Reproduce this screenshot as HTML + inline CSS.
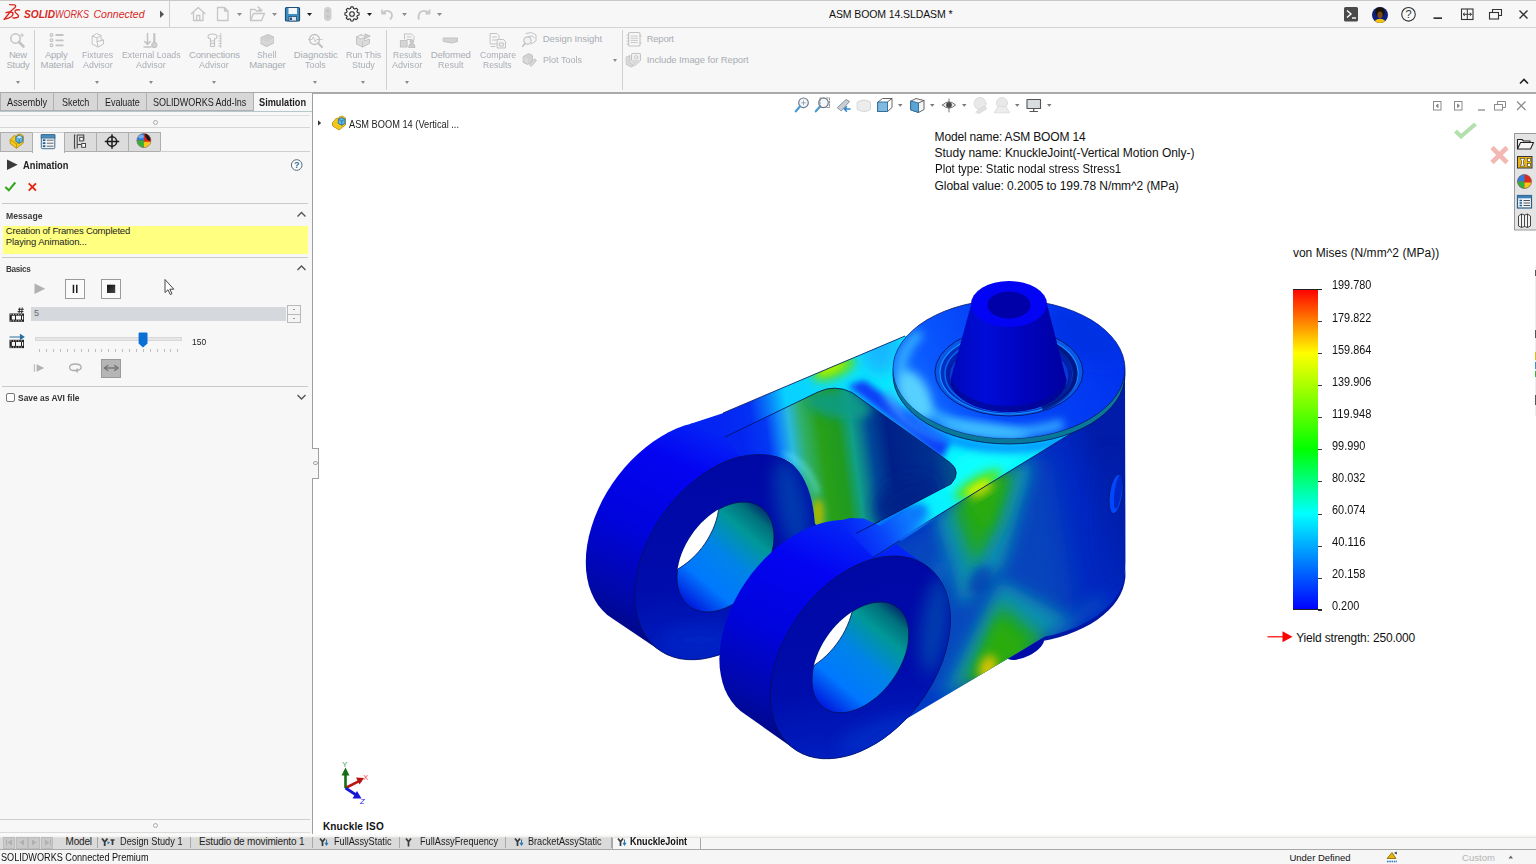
<!DOCTYPE html>
<html lang="en">
<head>
<meta charset="utf-8">
<title>ASM BOOM 14.SLDASM *</title>
<style>
*{box-sizing:border-box;margin:0;padding:0}
html,body{width:1536px;height:864px;overflow:hidden;background:#f7f7f7;font-family:"Liberation Sans",sans-serif;font-size:11px;color:#1e1e1e}
.abs{position:absolute}
#titlebar{position:absolute;left:0;top:0;width:1536px;height:28px;background:#f7f7f7;box-shadow:inset 0 1px 0 #c8c8c8, inset 0 -1px 0 #d4d4d4}
#ribbon{position:absolute;left:0;top:28px;width:1536px;height:65px;background:#f7f7f7;border-bottom:1px solid #a9a9a9}
.rb{position:absolute;text-align:center;color:#a9adb3;font-size:10.5px;line-height:10.5px;white-space:nowrap;letter-spacing:.1px}
.rb2{position:absolute;color:#a9adb3;font-size:10px;white-space:nowrap;letter-spacing:.2px}
.dd{position:absolute;width:0;height:0;border-left:2.5px solid transparent;border-right:2.5px solid transparent;border-top:3px solid #8a8a8a}
.ddk{position:absolute;width:0;height:0;border-left:2.5px solid transparent;border-right:2.5px solid transparent;border-top:3px solid #222}
.vsep{position:absolute;width:1px;background:#d0d0d0}
#tabs{position:absolute;left:0;top:93px;width:313px;height:18px}
.tab{position:absolute;top:0;height:18px;background:#d7d7d7;border:1px solid #b0b0b0;border-top:none;font-size:11px;line-height:17px;text-align:center;color:#1e1e1e;white-space:nowrap}
#left{position:absolute;left:0;top:111px;width:312px;height:724px;background:#f7f7f7}
#vp{position:absolute;left:312px;top:93px;width:1224px;height:742px;background:#fff;border-left:1px solid #a0a0a0;border-top:1px solid #a9a9a9}
.hline{position:absolute;height:1px;background:#c9c9c9}
.sec{position:absolute;font-weight:bold;font-size:10px;color:#333;letter-spacing:0}
.vt{position:absolute;white-space:nowrap;color:#111}
#btabs{position:absolute;left:0;top:834px;width:1536px;height:15.500px;background:linear-gradient(to bottom,#ffffff 0,#f3f3f3 2.500px,#e6e3dc 2.800px,#e6e3dc 3.500px,#f6f6f6 3.600px);border-bottom:1px solid #a8a8a8}
.bt{position:absolute;top:0;height:13px;font-size:10.5px;line-height:13px;white-space:nowrap;color:#1e1e1e}
#status{position:absolute;left:0;top:849.500px;width:1536px;height:15px;background:#f6f6f6}
.t{position:absolute;white-space:nowrap;color:#1e1e1e}
</style>
</head>
<body>
<div id="titlebar">
<svg class="abs" style="left:0;top:0" width="470" height="27" viewBox="0 0 470 27">
 <!-- DS logo -->
 <g fill="none" stroke="#d9281f" stroke-width="1.35" stroke-linecap="round" stroke-linejoin="round">
  <path d="M9.600 4.600 L14.300 4.900 Q16.600 5.600 15 7.600 L11.200 10.800 L4.300 19.200"/>
  <path d="M6 12.700 Q10 11.400 12.700 12.700 Q13.700 14.500 11.500 16.500 Q8 18.900 4.300 19.200"/>
  <path d="M19.700 9.800 Q16 9.400 15 10.900 Q14.700 12.400 17 14 Q19.400 16 18 17.200 Q16 18.300 12.800 17.900"/>
 </g>
 <text y="18.400" font-family="Liberation Sans, sans-serif" font-size="10" font-style="italic" fill="#d9281f"><tspan x="24" font-weight="bold" textLength="31" lengthAdjust="spacingAndGlyphs">SOLID</tspan><tspan x="55" textLength="34" lengthAdjust="spacingAndGlyphs">WORKS</tspan><tspan> </tspan><tspan x="93.500" font-size="10.700" textLength="51" lengthAdjust="spacingAndGlyphs">Connected</tspan></text>
 <path d="M160 10.5 L164 14.2 L160 18 Z" fill="#555"/>
 <rect x="169" y="1" width="1" height="26" fill="#cfcfcf"/>
 <!-- home -->
 <g fill="none" stroke="#c6c6c6" stroke-width="1.3" stroke-linejoin="round">
  <path d="M191 14 L198.2 7.5 L205.5 14 M193.5 12.5 V20.5 H203 V12.5 M196.7 20.5 V15.5 H199.8 V20.5"/>
  <path d="M217.5 7.5 H224.5 L228 11 V20.5 H217.5 Z M224.5 7.5 V11 H228"/>
  <path d="M250.500 20.500 V9.500 H255 L256.500 11 H259 M250.500 20.500 L253.500 13.500 H264.500 L261.500 20.500 Z"/>
  <path d="M257.500 7 Q260.500 7.500 260.500 11 M258.500 9.500 L260.500 11.500 L262.500 9.500"/>
 </g>
 <path d="M237 13 h5 l-2.500 3 z M272 13 h5 l-2.500 3 z" fill="#8d8d8d"/>
 <!-- save -->
 <rect x="285.500" y="7.500" width="14" height="13.500" rx="1" fill="#3d8fc0" stroke="#1f4e79" stroke-width="1.200"/>
 <rect x="288.500" y="8" width="8.500" height="6" fill="#f4f6f8"/>
 <rect x="289" y="16.500" width="7.500" height="4.500" fill="#dfe5ea" stroke="#1f4e79" stroke-width=".8"/>
 <rect x="290" y="17.500" width="2" height="2.500" fill="#1f4e79"/>
 <path d="M307 13 h5 l-2.500 3 z" fill="#222"/>
 <!-- traffic -->
 <rect x="324" y="7" width="7.500" height="14" rx="3.700" fill="#d0d0d0"/>
 <circle cx="327.700" cy="11" r="1.600" fill="#c2c2c2"/><circle cx="327.700" cy="16.500" r="1.600" fill="#c2c2c2"/>
 <!-- gear -->
 <g transform="translate(352,14)">
  <path d="M-1.200 -6.800 H1.200 L1.700 -5 L3 -4.400 L4.600 -5.400 L6.300 -3.700 L5.300 -2.100 L5.900 -0.800 L7.700 -0.400 V2 L5.900 2.500 L5.300 3.800 L6.300 5.400 L4.600 7.100 L3 6.100 L1.700 6.700 L1.200 8.500 H-1.200 L-1.700 6.700 L-3 6.100 L-4.600 7.100 L-6.300 5.400 L-5.300 3.800 L-5.900 2.500 L-7.700 2 V-0.400 L-5.900 -0.800 L-5.300 -2.100 L-6.300 -3.700 L-4.600 -5.400 L-3 -4.400 L-1.700 -5 Z" transform="translate(0,-0.850) scale(0.920)" fill="none" stroke="#2a2a2a" stroke-width="1.150" stroke-linejoin="round"/>
  <circle r="2.300" fill="none" stroke="#2a2a2a" stroke-width="1.100"/>
 </g>
 <path d="M367 13 h5 l-2.500 3 z" fill="#222"/>
 <!-- undo redo -->
 <g fill="none" stroke="#c8c8c8" stroke-width="1.800" stroke-linejoin="round">
  <path d="M382 9.500 L382 13.500 L386 13.500 M382.500 13 Q387 9 391 12.500 Q393.500 16 390 19.500"/>
  <path d="M429.500 9.500 L429.500 13.500 L425.500 13.500 M429 13 Q424 9 420 12.500 Q417.500 16 419 19.500"/>
 </g>
 <path d="M402 13 h5 l-2.500 3 z M437 13 h5 l-2.500 3 z" fill="#8d8d8d"/>
</svg>
<div class="abs" style="left:829px;top:8px;font-size:10.500px;line-height:12px;color:#111;white-space:nowrap;letter-spacing:-.1px">ASM BOOM 14.SLDASM *</div>
<svg class="abs" style="left:1336px;top:0" width="200" height="27" viewBox="1336 0 200 27">
 <rect x="1344" y="7" width="14" height="14.500" rx="1.500" fill="#4a4a4a"/>
 <path d="M1347 10.500 L1351 14 L1347 17.500" fill="none" stroke="#fff" stroke-width="1.400"/><path d="M1352 18 H1356" stroke="#fff" stroke-width="1.400"/>
 <circle cx="1380" cy="15" r="8" fill="#10207a"/>
 <circle cx="1380" cy="12" r="4.800" fill="#1a1208"/>
 <ellipse cx="1380" cy="14.800" rx="2.600" ry="3.400" fill="#7a4a1e"/>
 <path d="M1374.500 21 Q1380 16.500 1385.500 21 Q1383 23 1380 23 Q1377 23 1374.500 21 Z" fill="#f2c40f"/>
 <circle cx="1408.500" cy="14.300" r="6.800" fill="none" stroke="#333" stroke-width="1.100"/>
 <text x="1408.500" y="18.300" text-anchor="middle" font-family="Liberation Sans, sans-serif" font-size="11" fill="#333">?</text>
 <rect x="1433.500" y="17.300" width="8.500" height="1.700" fill="#333"/>
 <rect x="1461.500" y="9" width="11.500" height="10.500" fill="none" stroke="#333" stroke-width="1.100"/>
 <path d="M1467.300 9 V19.500 M1463 14.300 H1471.500 M1464.800 12.800 L1463 14.300 L1464.800 15.800 M1469.800 12.800 L1471.500 14.300 L1469.800 15.800" fill="none" stroke="#333" stroke-width="1"/>
 <path d="M1492.500 12 V9.500 H1501.500 V15.500 H1499" fill="none" stroke="#333" stroke-width="1.100"/>
 <rect x="1489.500" y="12.500" width="9" height="6.500" fill="none" stroke="#333" stroke-width="1.100"/>
 <path d="M1519.500 10.500 L1527.500 18.500 M1527.500 10.500 L1519.500 18.500" stroke="#333" stroke-width="1.400"/>
</svg>
</div>
<div id="ribbon">
</div>
<div id="ribbonc" style="position:absolute;left:0;top:0;width:1536px;height:93px">
<div class="vsep" style="left:34px;top:30px;height:60px"></div>
<div class="vsep" style="left:386px;top:30px;height:60px"></div>
<div class="vsep" style="left:622px;top:30px;height:60px"></div>
<div class="t" style="left:8.9px;top:48.11px;font-size:9.5px;line-height:14px;letter-spacing:-0.402px;color:#a9adb3;">New</div>
<div class="t" style="left:6.5px;top:58.11px;font-size:9.5px;line-height:14px;letter-spacing:-0.273px;color:#a9adb3;">Study</div>
<div class="dd" style="left:15.5px;top:81px"></div>
<div class="t" style="left:44.9px;top:48.11px;font-size:9.5px;line-height:14px;letter-spacing:-0.241px;color:#a9adb3;">Apply</div>
<div class="t" style="left:40.6px;top:58.11px;font-size:9.5px;line-height:14px;letter-spacing:-0.112px;color:#a9adb3;">Material</div>
<div class="t" style="left:81.8px;top:48.11px;font-size:9.5px;line-height:14px;transform:scaleX(0.9236);transform-origin:0 50%;color:#a9adb3;">Fixtures</div>
<div class="t" style="left:83.0px;top:58.11px;font-size:9.5px;line-height:14px;transform:scaleX(0.9376);transform-origin:0 50%;color:#a9adb3;">Advisor</div>
<div class="dd" style="left:94.8px;top:81px"></div>
<div class="t" style="left:121.7px;top:48.11px;font-size:9.5px;line-height:14px;transform:scaleX(0.9247);transform-origin:0 50%;color:#a9adb3;">External Loads</div>
<div class="t" style="left:136.2px;top:58.11px;font-size:9.5px;line-height:14px;transform:scaleX(0.9376);transform-origin:0 50%;color:#a9adb3;">Advisor</div>
<div class="dd" style="left:148.5px;top:81px"></div>
<div class="t" style="left:189.0px;top:48.11px;font-size:9.5px;line-height:14px;letter-spacing:-0.181px;color:#a9adb3;">Connections</div>
<div class="t" style="left:199.4px;top:58.11px;font-size:9.5px;line-height:14px;transform:scaleX(0.9376);transform-origin:0 50%;color:#a9adb3;">Advisor</div>
<div class="dd" style="left:212.1px;top:81px"></div>
<div class="t" style="left:257.0px;top:48.11px;font-size:9.5px;line-height:14px;transform:scaleX(0.9231);transform-origin:0 50%;color:#a9adb3;">Shell</div>
<div class="t" style="left:249.2px;top:58.11px;font-size:9.5px;line-height:14px;letter-spacing:-0.165px;color:#a9adb3;">Manager</div>
<div class="t" style="left:293.8px;top:48.11px;font-size:9.5px;line-height:14px;letter-spacing:-0.039px;color:#a9adb3;">Diagnostic</div>
<div class="t" style="left:305.2px;top:58.11px;font-size:9.5px;line-height:14px;transform:scaleX(0.9379);transform-origin:0 50%;color:#a9adb3;">Tools</div>
<div class="dd" style="left:313.0px;top:81px"></div>
<div class="t" style="left:345.9px;top:48.11px;font-size:9.5px;line-height:14px;transform:scaleX(0.9329);transform-origin:0 50%;color:#a9adb3;">Run This</div>
<div class="t" style="left:352.1px;top:58.11px;font-size:9.5px;line-height:14px;transform:scaleX(0.9386);transform-origin:0 50%;color:#a9adb3;">Study</div>
<div class="dd" style="left:360.8px;top:81px"></div>
<div class="t" style="left:392.6px;top:48.11px;font-size:9.5px;line-height:14px;transform:scaleX(0.8997);transform-origin:0 50%;color:#a9adb3;">Results</div>
<div class="t" style="left:392.2px;top:58.11px;font-size:9.5px;line-height:14px;transform:scaleX(0.9534);transform-origin:0 50%;color:#a9adb3;">Advisor</div>
<div class="dd" style="left:404.5px;top:81px"></div>
<div class="t" style="left:430.8px;top:48.11px;font-size:9.5px;line-height:14px;letter-spacing:-0.244px;color:#a9adb3;">Deformed</div>
<div class="t" style="left:437.7px;top:58.11px;font-size:9.5px;line-height:14px;transform:scaleX(0.9433);transform-origin:0 50%;color:#a9adb3;">Result</div>
<div class="t" style="left:479.7px;top:48.11px;font-size:9.5px;line-height:14px;transform:scaleX(0.9215);transform-origin:0 50%;color:#a9adb3;">Compare</div>
<div class="t" style="left:483.0px;top:58.11px;font-size:9.5px;line-height:14px;transform:scaleX(0.9029);transform-origin:0 50%;color:#a9adb3;">Results</div>
<div class="t" style="left:542.8px;top:32.31px;font-size:9.5px;line-height:14px;letter-spacing:-0.069px;color:#a9adb3;">Design Insight</div>
<div class="t" style="left:542.8px;top:53.11px;font-size:9.5px;line-height:14px;transform:scaleX(0.9509);transform-origin:0 50%;color:#a9adb3;">Plot Tools</div>
<div class="t" style="left:646.7px;top:32.31px;font-size:9.5px;line-height:14px;letter-spacing:-0.242px;color:#a9adb3;">Report</div>
<div class="t" style="left:646.7px;top:53.11px;font-size:9.5px;line-height:14px;letter-spacing:-0.111px;color:#a9adb3;">Include Image for Report</div>
<div class="dd" style="left:613px;top:58.5px"></div>
<svg class="abs" style="left:1518px;top:77px" width="12" height="9" viewBox="0 0 12 9"><path d="M2 6.500 L6 2.500 L10 6.500" fill="none" stroke="#222" stroke-width="1.600"/></svg>
<svg class="abs" style="left:0;top:28px" width="760" height="65" viewBox="0 28 760 65">
<g fill="none" stroke="#c3c3c3" stroke-width="1.200" stroke-linejoin="round" stroke-linecap="round">
 <!-- new study -->
 <circle cx="15.500" cy="38.500" r="4.700" stroke-width="1.500"/>
 <path d="M19 42 L23.500 46.500" stroke-width="2.600"/>
 <path d="M22 33.500 V37 M20.300 35.200 H23.800" stroke-width=".9"/>
 <!-- apply material -->
 <circle cx="51.500" cy="35" r="1.400"/><circle cx="51.500" cy="40.300" r="1.400"/><circle cx="51.500" cy="45.300" r="1.400"/>
 <path d="M55.500 35 H63.500 M55.500 40.300 H63.500 M55.500 45.300 H63.500" stroke-width="1.800" stroke-linecap="butt"/>
 <!-- fixtures advisor -->
 <path d="M92.500 36 L96.500 33.500 L101 35.500 V39 L103.500 40.200 V44 L98 47 L92.500 44.200 Z M92.500 36 L97 38 L101 35.500 M97 38 V41.500 L103.500 40.200 M97 41.500 L98 47" stroke-width="1"/>
 <!-- external loads -->
 <path d="M147.500 33.500 V44 M144.800 41.500 L147.500 44.500 L150.200 41.500 M144 47 H151" stroke-width="1.500"/>
 <path d="M154.300 34 V43.500" stroke-width="2.200"/><circle cx="154.300" cy="45" r="2.500" fill="#d2d2d2"/>
 <!-- connections advisor -->
 <path d="M208 36.500 Q208 34 212.500 34 Q217 34 217 36.500 Q217 38.500 214.500 38.800 V46.500 H210.500 V38.800 Q208 38.500 208 36.500 Z M210.500 41 H214.500 M210.500 43.500 H214.500" stroke-width="1.100"/>
 <path d="M220.800 33.500 V47.500 M218.500 36 H220.800 M219.200 38.500 H220.800 M218.500 41 H220.800 M219.200 43.500 H220.800 M218.500 46 H220.800" stroke-width=".9"/>
 <!-- shell manager -->
 <path d="M261 37.500 L268 34.500 L273.500 37 V43 L266.500 46.500 L261 43.500 Z" fill="#d0d0d0" stroke="#c8c8c8"/>
 <path d="M261 39.500 L266.500 42.500 L273.500 39 M261 41.500 L266.500 44.500 L273.500 41" stroke="#e4e4e4" stroke-width=".7"/>
 <!-- diagnostic -->
 <circle cx="314.500" cy="39.500" r="5" stroke-width="1.300"/>
 <path d="M318.500 43.500 L322 47" stroke-width="2.200"/>
 <path d="M308.500 39.500 H312 L313.300 37 L315.300 42 L316.500 39.500 H322" stroke-width=".9"/>
 <!-- run this study -->
 <path d="M356.500 37 L361 34.500 L364 36 M356.500 37 V44 L362.500 47 L369.500 43.500 V39 L364.500 41 V37.500 L361 39 L356.500 37 M362.500 47 V42" stroke-width="1" fill="#dcdcdc"/>
 <path d="M365 34 L370 36 L365 38.500 Z" fill="#cfcfcf"/>
 <!-- results advisor -->
 <path d="M404.500 34 H411.500 L414 36.500 V40 M404.500 34 V39 M407 37 H411 M407 39.500 H411" stroke-width="1"/>
 <rect x="400.500" y="40.500" width="6.500" height="6.500" fill="#d6d6d6"/>
 <circle cx="411.800" cy="41.500" r="1.700" fill="#cdcdcd"/><path d="M408.800 47.500 Q408.800 43.800 411.800 43.800 Q414.800 43.800 414.800 47.500 Z" fill="#cdcdcd"/>
 <!-- deformed -->
 <path d="M443.500 38 H457.500 V41.500 L452 43 L443.500 41.500 Z" fill="#d3d3d3" stroke-width="1"/>
 <!-- compare -->
 <path d="M490.500 33.500 H497 L499 35.500 V44 H490.500 Z M492.500 37 H496.500 M492.500 40 H496.500" stroke-width="1"/>
 <path d="M497.500 39.500 H503.500 L505.500 41.500 V48 H497.500 Z" fill="#f3f3f3" stroke-width="1"/>
 <path d="M499.800 43 H503.300 V46 H499.800 Z M491 46.500 H495" stroke-width="1"/>
 <!-- design insight -->
 <path d="M526 33.500 L531.500 32.500 L536 35 V41 L531 44 M528.500 36.500 L532 36 L534.500 38" stroke-width="1"/>
 <circle cx="527.500" cy="40.500" r="3.700" stroke-width="1.200" fill="#f1f1f1"/>
 <path d="M525 43.500 L522.800 46.300" stroke-width="1.600"/>
 <!-- plot tools -->
 <path d="M523.500 56.500 L528.500 53.500 L532.500 55.500 V61 L527.500 64.500 L523.500 62.500 Z" fill="#d2d2d2" stroke-width="1"/>
 <path d="M525 58.500 L527.500 59.800 M525 60.800 L527.500 62" stroke="#ececec" stroke-width=".8"/>
 <path d="M531.500 66 L536.500 60.500 L534.500 58.800 L529.500 64.500 Z" fill="#d8d8d8" stroke-width="1"/>
 <!-- report -->
 <rect x="628.500" y="32.500" width="11.500" height="13.500" rx="1.300" stroke-width="1.100"/>
 <path d="M631 36 H637.500 M631 38.200 H637.500 M631 40.400 H637.500 M631 42.600 H637.500" stroke-width=".9"/>
 <path d="M627 35 H629 M627 38 H629 M627 41 H629 M627 44 H629 M640 36 H641.300 M640 43 H641.300" stroke-width=".9"/>
 <!-- include image -->
 <path d="M626.500 57 L630 55.500 V63 L634.500 65.500 L631 67 L626.500 64.500 Z" fill="#d9d9d9" stroke-width=".9"/>
 <rect x="631.500" y="53.500" width="9" height="7.500" rx=".8" fill="#f0f0f0" stroke-width="1"/>
 <circle cx="636.200" cy="57.300" r="1.700" stroke-width=".9"/>
 <path d="M630 61.500 H640.500 L635.500 66 Z" fill="#d9d9d9" stroke="none"/>
</g>
</svg>
</div>
<div id="tabs">
<div class="tab" style="left:-0.5px;width:54.0px"></div>
<div class="tab" style="left:52.5px;width:45.5px"></div>
<div class="tab" style="left:97.0px;width:49.5px"></div>
<div class="tab" style="left:145.5px;width:108.0px"></div>
</div>
<div id="left"></div>
<div id="leftc" style="position:absolute;left:0;top:0;width:313px;height:836px">
<div class="t" style="left:6.7px;top:94.96px;font-size:10.5px;line-height:14px;transform:scaleX(0.8833);transform-origin:0 50%;">Assembly</div>
<div class="t" style="left:61.9px;top:94.96px;font-size:10.5px;line-height:14px;transform:scaleX(0.8600);transform-origin:0 50%;letter-spacing:-0.071px;">Sketch</div>
<div class="t" style="left:104.8px;top:94.96px;font-size:10.5px;line-height:14px;transform:scaleX(0.8600);transform-origin:0 50%;letter-spacing:-0.056px;">Evaluate</div>
<div class="t" style="left:153.0px;top:94.96px;font-size:10.5px;line-height:14px;transform:scaleX(0.8600);transform-origin:0 50%;letter-spacing:-0.071px;">SOLIDWORKS Add-Ins</div>
<div class="t" style="left:259.4px;top:94.96px;font-size:10.5px;line-height:14px;transform:scaleX(0.8758);transform-origin:0 50%;font-weight:bold;">Simulation</div>
<div class="hline" style="left:0;top:110.500px;width:312px;height:1.500px;background:#b5c9cb"></div>
<div class="hline" style="left:0;top:115px;width:310px;background:#dedede"></div>
<div class="abs" style="left:152.500px;top:119.500px;width:5px;height:5px;border:1px solid #aaa;border-radius:50%"></div>
<div class="hline" style="left:0;top:127px;width:310px;background:#d6d6d6"></div>
<div class="abs" style="left:-0.5px;top:131.500px;width:33px;height:20.500px;background:#dcdcdc;border:1px solid #aeaeae"></div>
<div class="abs" style="left:31.5px;top:131.500px;width:33px;height:21px;background:#f7f7f7;border:1px solid #aeaeae;border-bottom:none;border-top-color:#d0d0d0"></div>
<div class="abs" style="left:63.5px;top:131.500px;width:33px;height:20.500px;background:#dcdcdc;border:1px solid #aeaeae"></div>
<div class="abs" style="left:95.5px;top:131.500px;width:33px;height:20.500px;background:#dcdcdc;border:1px solid #aeaeae"></div>
<div class="abs" style="left:127.5px;top:131.500px;width:33px;height:20.500px;background:#dcdcdc;border:1px solid #aeaeae"></div>
<div class="hline" style="left:160px;top:151px;width:150px;background:#cfcfcf"></div>
<div class="t" style="left:22.5px;top:158.26px;font-size:10.5px;line-height:14px;transform:scaleX(0.8845);transform-origin:0 50%;font-weight:bold;color:#222;">Animation</div>
<div class="hline" style="left:2px;top:203px;width:306px"></div>
<div class="t" style="left:5.8px;top:208.61px;font-size:9.5px;line-height:14px;transform:scaleX(0.9095);transform-origin:0 50%;font-weight:bold;color:#3a3a3a;">Message</div>
<div class="abs" style="left:2.500px;top:225.500px;width:305.500px;height:28px;background:#ffff80"></div>
<div class="t" style="left:5.8px;top:224.21px;font-size:9.5px;line-height:14px;letter-spacing:-0.203px;color:#222;">Creation of Frames Completed</div>
<div class="t" style="left:5.8px;top:234.61px;font-size:9.5px;line-height:14px;letter-spacing:-0.117px;color:#222;">Playing Animation...</div>
<div class="hline" style="left:2px;top:257px;width:306px"></div>
<div class="t" style="left:5.8px;top:262.11px;font-size:9.5px;line-height:14px;transform:scaleX(0.8600);transform-origin:0 50%;letter-spacing:-0.359px;font-weight:bold;color:#3a3a3a;">Basics</div>
<div class="abs" style="left:65px;top:279px;width:20px;height:20px;background:#fbfbfb;border:1px solid #9a9a9a"></div>
<div class="abs" style="left:101px;top:279px;width:20px;height:20px;background:#fbfbfb;border:1px solid #9a9a9a"></div>
<div class="abs" style="left:31px;top:307px;width:254.500px;height:14px;background:#d5d8dc"></div>
<div class="t" style="left:34.0px;top:305.68px;font-size:9px;line-height:14px;color:#6a6a6a;">5</div>
<div class="abs" style="left:287px;top:305px;width:13.500px;height:18px;border:1px solid #b9b9b9;background:#f4f4f4"></div>
<div class="hline" style="left:287px;top:313.500px;width:13.500px;background:#b9b9b9"></div>
<div class="abs" style="left:292.500px;top:309px;width:2px;height:1px;background:#999"></div><div class="abs" style="left:292.500px;top:318px;width:2px;height:1px;background:#999"></div>
<div class="abs" style="left:35px;top:337px;width:147px;height:4px;background:#e6e6e6;border:1px solid #d8d8d8"></div>
<div class="abs" style="left:39.3px;top:349px;width:1px;height:3px;background:#bdbdbd"></div><div class="abs" style="left:46.2px;top:349px;width:1px;height:3px;background:#bdbdbd"></div><div class="abs" style="left:53.1px;top:349px;width:1px;height:3px;background:#bdbdbd"></div><div class="abs" style="left:60.0px;top:349px;width:1px;height:3px;background:#bdbdbd"></div><div class="abs" style="left:66.9px;top:349px;width:1px;height:3px;background:#bdbdbd"></div><div class="abs" style="left:73.8px;top:349px;width:1px;height:3px;background:#bdbdbd"></div><div class="abs" style="left:80.7px;top:349px;width:1px;height:3px;background:#bdbdbd"></div><div class="abs" style="left:87.6px;top:349px;width:1px;height:3px;background:#bdbdbd"></div><div class="abs" style="left:94.5px;top:349px;width:1px;height:3px;background:#bdbdbd"></div><div class="abs" style="left:101.4px;top:349px;width:1px;height:3px;background:#bdbdbd"></div><div class="abs" style="left:108.3px;top:349px;width:1px;height:3px;background:#bdbdbd"></div><div class="abs" style="left:115.2px;top:349px;width:1px;height:3px;background:#bdbdbd"></div><div class="abs" style="left:122.1px;top:349px;width:1px;height:3px;background:#bdbdbd"></div><div class="abs" style="left:129.0px;top:349px;width:1px;height:3px;background:#bdbdbd"></div><div class="abs" style="left:135.9px;top:349px;width:1px;height:3px;background:#bdbdbd"></div><div class="abs" style="left:142.8px;top:349px;width:1px;height:3px;background:#bdbdbd"></div><div class="abs" style="left:149.7px;top:349px;width:1px;height:3px;background:#bdbdbd"></div><div class="abs" style="left:156.6px;top:349px;width:1px;height:3px;background:#bdbdbd"></div><div class="abs" style="left:163.5px;top:349px;width:1px;height:3px;background:#bdbdbd"></div><div class="abs" style="left:170.4px;top:349px;width:1px;height:3px;background:#bdbdbd"></div><div class="abs" style="left:177.3px;top:349px;width:1px;height:3px;background:#bdbdbd"></div>
<div class="t" style="left:191.7px;top:334.71px;font-size:9.5px;line-height:14px;transform:scaleX(0.8897);transform-origin:0 50%;color:#222;">150</div>
<div class="abs" style="left:101px;top:358.500px;width:20px;height:19.500px;background:#b5b5b5;border:1px solid #9a9a9a"></div>
<div class="hline" style="left:2px;top:385.500px;width:306px"></div>
<div class="abs" style="left:5.500px;top:392.500px;width:9.500px;height:9.500px;background:#fff;border:1px solid #777;border-radius:2px"></div>
<div class="t" style="left:17.7px;top:391.01px;font-size:9.5px;line-height:14px;transform:scaleX(0.8891);transform-origin:0 50%;font-weight:bold;color:#333;">Save as AVI file</div>
<div class="hline" style="left:0;top:832px;width:310px;background:#dcdcdc"></div>
<div class="hline" style="left:0;top:819px;width:310px;background:#cfcfcf"></div>
<div class="abs" style="left:152.500px;top:823px;width:5px;height:5px;border:1px solid #aaa;border-radius:50%"></div>
<svg class="abs" style="left:0;top:128px" width="312" height="280" viewBox="0 128 312 280">
 <!-- tab1: assembly icon -->
 <path d="M10.200 139.500 L14 135.500 L17 136.500 V134.800 L20.500 134 L23.300 135.800 V143 L16.500 148.300 L10.200 143.500 Z" fill="#f3c81d" stroke="#b8860b" stroke-width=".8" stroke-linejoin="round"/>
 <path d="M10.200 139.500 L16.500 144 L23.300 139.500 M16.500 144 V148.300" fill="none" stroke="#b8860b" stroke-width=".7"/>
 <path d="M15.800 137 L19.300 135.200 L22.800 137 V141.300 L19.300 143.300 L15.800 141.300 Z" fill="#5db9e6" stroke="#1f6e9c" stroke-width=".8" stroke-linejoin="round"/>
 <path d="M15.800 137 L19.300 138.800 L22.800 137 M19.300 138.800 V143.300" fill="none" stroke="#1f6e9c" stroke-width=".7"/>
 <path d="M16.300 137.300 L19.300 135.800 L22.300 137.300 L19.300 138.800 Z" fill="#bfe6f7"/>
 <!-- tab2: property manager -->
 <rect x="41.300" y="134.700" width="13.500" height="14" rx="1" fill="#f2f5f8" stroke="#3c6d92" stroke-width="1"/>
 <rect x="41.300" y="134.700" width="13.500" height="3.300" fill="#4b8fc1" stroke="#3c6d92" stroke-width="1"/>
 <rect x="42.800" y="139.300" width="2.600" height="1.800" fill="#1d5f90"/><rect x="42.800" y="142.300" width="2.600" height="1.800" fill="#1d5f90"/><rect x="42.800" y="145.300" width="2.600" height="1.800" fill="#1d5f90"/>
 <path d="M46.800 140.200 H53.500 M46.800 143.200 H53.500 M46.800 146.200 H53.500" stroke="#666" stroke-width="1"/>
 <!-- tab3: configuration manager -->
 <path d="M75.500 135 H74.500 V148.300 H75.500" fill="none" stroke="#444" stroke-width="1.100"/>
 <path d="M77.200 135 H83.800 V140.500 M77.200 135 V148.300 M77.200 144.500 H81" fill="none" stroke="#444" stroke-width="1.100"/>
 <rect x="79.700" y="137.300" width="3.600" height="3.600" fill="#fff" stroke="#444" stroke-width="1"/>
 <rect x="81.700" y="143.500" width="3.800" height="3.800" fill="#fff" stroke="#444" stroke-width="1"/>
 <!-- tab4: crosshair -->
 <circle cx="112" cy="141.500" r="4.700" fill="none" stroke="#1a1a1a" stroke-width="1.500"/>
 <path d="M112 134.300 V148.700 M104.800 141.500 H119.200" stroke="#1a1a1a" stroke-width="1.500"/>
 <!-- tab5: color ball -->
 <defs><clipPath id="cb"><circle cx="143.900" cy="140.600" r="7.100"/></clipPath></defs>
 <g clip-path="url(#cb)">
  <rect x="136" y="133" width="16" height="16" fill="#e0281d"/>
  <path d="M136 133 H143.900 V140.600 H136 Z" fill="#2d7ee0"/>
  <path d="M136 140.600 H143.900 V149 H136 Z" fill="#35b13a"/>
  <path d="M143.900 141.800 H152 V149 H143.900 Z" fill="#f5c518"/>
  <path d="M143.900 133 L152 133 L152 141 Z" fill="#e0281d"/>
  <ellipse cx="147.600" cy="137" rx="1.800" ry="4.300" transform="rotate(-32 147.600 137)" fill="#1a1a1a"/>
  <ellipse cx="141" cy="136.500" rx="3" ry="1.800" fill="#fff" opacity=".35"/>
 </g>
 <circle cx="143.900" cy="140.600" r="7.100" fill="none" stroke="#7a7a7a" stroke-width=".5"/>
 <!-- animation header -->
 <path d="M7 159.600 L17.700 164.800 L7 170.100 Z" fill="#3a3a3a"/>
 <circle cx="296.700" cy="165" r="5.300" fill="#fdfdfd" stroke="#5b6b7d" stroke-width="1"/>
 <text x="296.700" y="168.300" text-anchor="middle" font-family="Liberation Sans, sans-serif" font-size="9" font-weight="bold" fill="#2d6da3">?</text>
 <path d="M5.300 187 L8.800 190.300 L15.300 182.500" fill="none" stroke="#33a61c" stroke-width="2.100" stroke-linejoin="miter"/>
 <path d="M28.700 183.300 L36 190.700 M36 183.300 L28.700 190.700" stroke="#e0280f" stroke-width="1.900"/>
 <!-- carets -->
 <g fill="none" stroke="#555" stroke-width="1.400">
  <path d="M297.500 216.500 L301.500 212.500 L305.500 216.500"/>
  <path d="M297.500 270 L301.500 266 L305.500 270"/>
  <path d="M297.500 395 L301.500 399 L305.500 395"/>
 </g>
 <!-- play / pause / stop -->
 <path d="M34.500 283.500 L45.200 288.800 L34.500 294 Z" fill="#b1b1b1"/>
 <path d="M72.700 284.700 H74.200 V293 H72.700 Z M76 284.700 H77.500 V293 H76 Z" fill="#1c1c1c"/>
 <defs><linearGradient id="stp" x1="0" y1="0" x2="1" y2="1"><stop offset="0" stop-color="#111"/><stop offset="1" stop-color="#484848"/></linearGradient></defs>
 <rect x="107" y="284.700" width="8.200" height="8.300" fill="url(#stp)"/>
 <!-- mouse cursor -->
 <path d="M165 279.500 V292.500 L168 289.800 L170.200 294.500 L172 293.700 L169.800 289.200 H173.800 Z" fill="#fff" stroke="#333" stroke-width=".9" stroke-linejoin="round"/>
 <!-- film icons -->
 <g>
  <rect x="9.500" y="313.500" width="14.500" height="8.300" fill="#1e1e1e"/>
  <rect x="11.800" y="315.700" width="3.200" height="3.900" fill="#f7f7f7"/><rect x="16" y="315.700" width="5" height="3.900" fill="#f7f7f7"/><rect x="22" y="315.700" width="1.200" height="3.900" fill="#f7f7f7"/>
  <path d="M10.300 314.600 h1.200 M12.900 314.600 h1.200 M15.500 314.600 h1.200 M18.100 314.600 h1.200 M20.700 314.600 h1.200 M10.300 320.800 h1.200 M12.900 320.800 h1.200 M15.500 320.800 h1.200 M18.100 320.800 h1.200 M20.700 320.800 h1.200" stroke="#f7f7f7" stroke-width=".8"/>
 </g>
 <path d="M19.800 307.500 L19 313.300 M22.300 307.500 L21.500 313.300 M18 309.300 H23.800 M17.600 311.600 H23.400" stroke="#1e1e1e" stroke-width=".9"/>
 <g transform="translate(0,26.300)">
  <rect x="9.500" y="313.500" width="14.500" height="8.300" fill="#1e1e1e"/>
  <rect x="11.800" y="315.700" width="3.200" height="3.900" fill="#f7f7f7"/><rect x="16" y="315.700" width="5" height="3.900" fill="#f7f7f7"/><rect x="22" y="315.700" width="1.200" height="3.900" fill="#f7f7f7"/>
  <path d="M10.300 314.600 h1.200 M12.900 314.600 h1.200 M15.500 314.600 h1.200 M18.100 314.600 h1.200 M20.700 314.600 h1.200 M10.300 320.800 h1.200 M12.900 320.800 h1.200 M15.500 320.800 h1.200 M18.100 320.800 h1.200 M20.700 320.800 h1.200" stroke="#f7f7f7" stroke-width=".8"/>
 </g>
 <path d="M9.500 337 H22.500 M20.500 334.800 L23.800 337 L20.500 339.200 Z" stroke="#2a6f9e" stroke-width="1.200" fill="#2a6f9e"/>
 <!-- slider thumb -->
 <path d="M138.600 333.500 Q138.600 332.500 139.600 332.500 H146.500 Q147.500 332.500 147.500 333.500 V343.500 L143 347.500 L138.600 343.500 Z" fill="#0b6fd6"/>
 <!-- step / loop / reciprocate -->
 <path d="M33.800 364.300 H34.900 V371.800 H33.800 Z M36.600 364.300 L44.300 368 L36.600 371.800 Z" fill="#b3b3b3"/>
 <path d="M75.500 370.500 H73 Q69.600 370.300 69.600 367.300 Q69.800 364 75.300 364 Q81 364 81.200 367.300 Q81 370 77.500 370.500" fill="none" stroke="#adadad" stroke-width="1.300"/>
 <path d="M77.800 368 L74.500 370.500 L77.800 373 Z" fill="#adadad"/>
 <path d="M106 368 H116.500" stroke="#6f6f6f" stroke-width="1.300"/>
 <path d="M108.200 365.300 L104.400 368 L108.200 370.700 M114.300 365.300 L118.100 368 L114.300 370.700" fill="none" stroke="#6f6f6f" stroke-width="1.300"/>
</svg>
</div>
<div id="vp"></div>
<div id="vpc" style="position:absolute;left:0;top:0;width:1536px;height:864px">
<div class="abs" style="left:312px;top:448px;width:7px;height:30.500px;background:#f7f7f7;border:1px solid #a0a0a0;border-left:none"></div>
<div class="abs" style="left:313px;top:460.500px;width:4.500px;height:4.500px;border:1px solid #a5a5a5;border-radius:50%"></div>
<svg class="abs" style="left:560px;top:260px" width="600" height="520" viewBox="560 260 600 520">
<defs>
<filter id="b3" x="-50%" y="-50%" width="200%" height="200%"><feGaussianBlur stdDeviation="3"/></filter>
<filter id="b5" x="-50%" y="-50%" width="200%" height="200%"><feGaussianBlur stdDeviation="5"/></filter>
<filter id="b8" x="-50%" y="-50%" width="200%" height="200%"><feGaussianBlur stdDeviation="8"/></filter>
<filter id="b12" x="-50%" y="-50%" width="200%" height="200%"><feGaussianBlur stdDeviation="12"/></filter>
<filter id="b18" x="-50%" y="-50%" width="200%" height="200%"><feGaussianBlur stdDeviation="18"/></filter>
<linearGradient id="gLugR" gradientUnits="userSpaceOnUse" x1="600" y1="650" x2="705" y2="420"><stop offset="0" stop-color="#000868"/><stop offset=".22" stop-color="#0008a8"/><stop offset=".5" stop-color="#0004dc"/><stop offset=".8" stop-color="#0404f2"/><stop offset="1" stop-color="#0428f6"/></linearGradient>
<linearGradient id="gLugF" gradientUnits="userSpaceOnUse" x1="735" y1="750" x2="840" y2="525"><stop offset="0" stop-color="#000868"/><stop offset=".22" stop-color="#0008a8"/><stop offset=".5" stop-color="#0004dc"/><stop offset=".8" stop-color="#0404f2"/><stop offset="1" stop-color="#0424f6"/></linearGradient>
<linearGradient id="gFaceR" gradientUnits="userSpaceOnUse" x1="700" y1="460" x2="730" y2="655"><stop offset="0" stop-color="#0008a4"/><stop offset=".6" stop-color="#000cac"/><stop offset="1" stop-color="#0020c0"/></linearGradient>
<linearGradient id="gFaceF" gradientUnits="userSpaceOnUse" x1="835" y1="560" x2="870" y2="758"><stop offset="0" stop-color="#0008a4"/><stop offset=".6" stop-color="#000cac"/><stop offset="1" stop-color="#0020c0"/></linearGradient>
<linearGradient id="gHoleR" gradientUnits="userSpaceOnUse" x1="690" y1="604" x2="768" y2="512"><stop offset="0" stop-color="#0020e0"/><stop offset=".22" stop-color="#0078ff"/><stop offset=".5" stop-color="#0084e8"/><stop offset=".75" stop-color="#009898"/><stop offset=".9" stop-color="#00707c"/><stop offset="1" stop-color="#003070"/></linearGradient>
<linearGradient id="gHoleF" gradientUnits="userSpaceOnUse" x1="825" y1="706" x2="903" y2="612"><stop offset="0" stop-color="#0020e0"/><stop offset=".22" stop-color="#0078ff"/><stop offset=".5" stop-color="#0084e8"/><stop offset=".75" stop-color="#009898"/><stop offset=".9" stop-color="#00707c"/><stop offset="1" stop-color="#003070"/></linearGradient>
<linearGradient id="gSide" gradientUnits="userSpaceOnUse" x1="900" y1="600" x2="1127" y2="520"><stop offset="0" stop-color="#0038c8"/><stop offset=".5" stop-color="#0030c0"/><stop offset=".85" stop-color="#0028c4"/><stop offset="1" stop-color="#001ca8"/></linearGradient>
<linearGradient id="gPocket" gradientUnits="userSpaceOnUse" x1="745" y1="470" x2="965" y2="440"><stop offset="0" stop-color="#0424f0"/><stop offset=".12" stop-color="#0438f4"/><stop offset=".18" stop-color="#1088f8"/><stop offset=".225" stop-color="#28b8e0"/><stop offset=".28" stop-color="#30b070"/><stop offset=".36" stop-color="#28a018"/><stop offset=".44" stop-color="#209a20"/><stop offset=".5" stop-color="#10a088"/><stop offset=".54" stop-color="#0a7890"/><stop offset=".58" stop-color="#004898"/><stop offset=".66" stop-color="#002088"/><stop offset=".84" stop-color="#003090"/><stop offset="1" stop-color="#006888"/></linearGradient>
<linearGradient id="gCone" gradientUnits="userSpaceOnUse" x1="950" y1="0" x2="1067" y2="0"><stop offset="0" stop-color="#0008b8"/><stop offset=".3" stop-color="#000cd8"/><stop offset=".6" stop-color="#0004c0"/><stop offset="1" stop-color="#0000a0"/></linearGradient>
<linearGradient id="gDisc" gradientUnits="userSpaceOnUse" x1="900" y1="430" x2="1110" y2="320"><stop offset="0" stop-color="#1480ff"/><stop offset=".25" stop-color="#0a58ff"/><stop offset=".5" stop-color="#0444f8"/><stop offset="1" stop-color="#0030ec"/></linearGradient>
<linearGradient id="gTop" gradientUnits="userSpaceOnUse" x1="720" y1="440" x2="1000" y2="400"><stop offset="0" stop-color="#0424f4"/><stop offset=".12" stop-color="#0430f4"/><stop offset=".185" stop-color="#0878f8"/><stop offset=".25" stop-color="#08d0ff"/><stop offset=".7" stop-color="#08f0ff"/><stop offset="1" stop-color="#08f4ff"/></linearGradient>
</defs>
<path d="M585.8 562.3 L586.1 553.8 L587.2 545.1 L588.9 536.3 L591.3 527.4 L594.3 518.4 L598.0 509.5 L602.2 500.6 L607.0 492.0 L612.4 483.6 L618.2 475.5 L624.5 467.8 L631.1 460.5 L638.2 453.7 L645.5 447.4 L653.0 441.8 L660.8 436.7 L668.6 432.3 L676.5 428.6 L684.4 425.6 L692.2 423.4 L700.0 421.9 L707.5 421.2 L714.8 421.4 L721.9 422.2 L728.5 423.9 L734.8 426.3 L740.6 429.5 L789.6 462.5 L795.0 466.3 L799.8 470.9 L804.0 476.1 L807.7 482.0 L810.7 488.4 L813.1 495.3 L814.8 502.7 L815.9 510.5 L816.2 518.7 L815.9 527.2 L814.8 535.9 L813.1 544.7 L810.7 553.6 L807.7 562.6 L804.0 571.5 L799.8 580.4 L795.0 589.0 L789.6 597.4 L783.8 605.5 L777.5 613.2 L770.9 620.5 L763.8 627.3 L756.5 633.5 L749.0 639.2 L741.2 644.3 L733.4 648.7 L725.5 652.4 L717.6 655.4 L709.8 657.6 L702.0 659.1 L694.5 659.8 L687.2 659.6 L680.1 658.8 L673.5 657.1 L667.2 654.7 L661.4 651.5 L612.4 618.5 L607.0 614.7 L602.2 610.1 L598.0 604.9 L594.3 599.0 L591.3 592.6 L588.9 585.7 L587.2 578.3 L586.1 570.5 Z" fill="url(#gLugR)"/>
<clipPath id="cTop"><path d="M690.0 424.0 L722.0 413.5 L905.0 336.0 L960.0 330.0 L1090.0 430.0 L1075.0 431.0 L872.0 556.0 L815.0 522.0 L790.0 460.0 L765.0 452.0 Z"/></clipPath>
<path d="M690.0 424.0 L722.0 413.5 L905.0 336.0 L960.0 330.0 L1090.0 430.0 L1075.0 431.0 L872.0 556.0 L815.0 522.0 L790.0 460.0 L765.0 452.0 Z" fill="url(#gTop)"/>
<g clip-path="url(#cTop)">
<ellipse cx="890" cy="528" rx="42" ry="13" transform="rotate(-29 890 528)" fill="#0458f8" filter="url(#b5)"/>
<path d="M848 386 L864 380 L950 443 L942 460 Z" fill="#0840f8" filter="url(#b3)"/>
<path d="M888 392 Q900 425 945 436" fill="none" stroke="#40a8ff" stroke-width="8" filter="url(#b5)"/>
<ellipse cx="985" cy="462" rx="50" ry="18" transform="rotate(-31 985 462)" fill="#10ffff" filter="url(#b8)"/>
<ellipse cx="978" cy="485" rx="27" ry="9" transform="rotate(-31 978 485)" fill="#50e828" filter="url(#b5)"/><ellipse cx="978" cy="488" rx="14" ry="5" transform="rotate(-31 978 488)" fill="#d0f000" filter="url(#b3)"/>
<ellipse cx="834" cy="368.500" rx="24" ry="10" transform="rotate(-23 834 368.500)" fill="#60e028" filter="url(#b5)"/><ellipse cx="831" cy="368" rx="14" ry="5" transform="rotate(-23 831 368)" fill="#a8f000" filter="url(#b3)"/>
<ellipse cx="880" cy="345" rx="20" ry="30" fill="#18b8ff" filter="url(#b8)"/>
<path d="M1108.1 416.9 L1103.3 420.8 L1098.0 424.5 L1092.3 428.0 L1086.2 431.2 L1079.8 434.2 L1073.1 436.9 L1066.1 439.4 L1058.9 441.5 L1051.4 443.4 L1043.7 444.9 L1035.9 446.2 L1027.9 447.1 L1019.9 447.7 L1011.8 448.0 L1003.7 447.9 L995.7 447.6 L987.6 446.9 L979.7 445.8 L971.9 444.5 L964.3 442.8 L956.9 440.9 L949.7 438.6 L942.8 436.1 L936.2 433.3 L929.9 430.2 L923.9 426.9 L918.4 423.4 L913.2 419.6 L908.5 415.6 L904.2 411.5" fill="none" stroke="#0850ff" stroke-width="6" filter="url(#b5)"/>
</g>
<path d="M723 413 L905 336" stroke="#00105a" stroke-width=".8" fill="none"/>
<path d="M816.2 518.7 L815.9 527.2 L814.8 535.8 L813.1 544.7 L810.7 553.6 L807.7 562.6 L804.0 571.5 L799.8 580.3 L795.0 589.0 L789.6 597.4 L783.8 605.5 L777.5 613.2 L770.9 620.5 L763.8 627.3 L756.5 633.5 L749.0 639.2 L741.2 644.3 L733.4 648.7 L725.5 652.4 L717.6 655.4 L709.8 657.6 L702.0 659.1 L694.5 659.7 L687.2 659.6 L680.1 658.8 L673.5 657.1 L667.2 654.7 L661.4 651.5 L656.0 647.7 L651.2 643.1 L647.0 637.9 L643.3 632.0 L640.3 625.6 L637.9 618.7 L636.2 611.3 L635.1 603.5 L634.8 595.3 L635.1 586.8 L636.2 578.2 L637.9 569.3 L640.3 560.4 L643.3 551.4 L647.0 542.5 L651.2 533.7 L656.0 525.0 L661.4 516.6 L667.2 508.5 L673.5 500.8 L680.1 493.5 L687.2 486.7 L694.5 480.5 L702.0 474.8 L709.8 469.7 L717.6 465.3 L725.5 461.6 L733.4 458.6 L741.2 456.4 L749.0 454.9 L756.5 454.3 L763.8 454.4 L770.9 455.2 L777.5 456.9 L783.8 459.3 L789.6 462.5 L795.0 466.3 L799.8 470.9 L804.0 476.1 L807.7 482.0 L810.7 488.4 L813.1 495.3 L814.8 502.7 L815.9 510.5 Z" fill="url(#gFaceR)" stroke="#00105a" stroke-width=".8"/>
<clipPath id="cFR"><path d="M816.2 518.7 L815.9 527.2 L814.8 535.8 L813.1 544.7 L810.7 553.6 L807.7 562.6 L804.0 571.5 L799.8 580.3 L795.0 589.0 L789.6 597.4 L783.8 605.5 L777.5 613.2 L770.9 620.5 L763.8 627.3 L756.5 633.5 L749.0 639.2 L741.2 644.3 L733.4 648.7 L725.5 652.4 L717.6 655.4 L709.8 657.6 L702.0 659.1 L694.5 659.7 L687.2 659.6 L680.1 658.8 L673.5 657.1 L667.2 654.7 L661.4 651.5 L656.0 647.7 L651.2 643.1 L647.0 637.9 L643.3 632.0 L640.3 625.6 L637.9 618.7 L636.2 611.3 L635.1 603.5 L634.8 595.3 L635.1 586.8 L636.2 578.2 L637.9 569.3 L640.3 560.4 L643.3 551.4 L647.0 542.5 L651.2 533.7 L656.0 525.0 L661.4 516.6 L667.2 508.5 L673.5 500.8 L680.1 493.5 L687.2 486.7 L694.5 480.5 L702.0 474.8 L709.8 469.7 L717.6 465.3 L725.5 461.6 L733.4 458.6 L741.2 456.4 L749.0 454.9 L756.5 454.3 L763.8 454.4 L770.9 455.2 L777.5 456.9 L783.8 459.3 L789.6 462.5 L795.0 466.3 L799.8 470.9 L804.0 476.1 L807.7 482.0 L810.7 488.4 L813.1 495.3 L814.8 502.7 L815.9 510.5 Z"/></clipPath>
<g clip-path="url(#cFR)"><ellipse cx="792" cy="505" rx="16" ry="48" transform="rotate(-12 792 505)" fill="#0044b0" opacity=".8" filter="url(#b8)"/><ellipse cx="700" cy="640" rx="40" ry="14" fill="#0028c8" opacity=".7" filter="url(#b8)"/></g>
<path d="M774.0 536.5 L773.8 541.0 L773.3 545.7 L772.3 550.4 L771.1 555.2 L769.5 560.0 L767.5 564.7 L765.2 569.5 L762.7 574.1 L759.8 578.6 L756.7 582.9 L753.3 587.0 L749.8 590.9 L746.0 594.6 L742.1 597.9 L738.1 601.0 L733.9 603.7 L729.7 606.0 L725.5 608.0 L721.3 609.6 L717.1 610.8 L712.9 611.6 L708.9 611.9 L705.0 611.9 L701.2 611.4 L697.7 610.5 L694.3 609.2 L691.2 607.6 L688.3 605.5 L685.8 603.0 L683.5 600.3 L681.5 597.1 L679.9 593.7 L678.7 590.0 L677.7 586.0 L677.2 581.9 L677.0 577.5 L677.2 573.0 L677.7 568.3 L678.7 563.6 L679.9 558.8 L681.5 554.0 L683.5 549.3 L685.8 544.5 L688.3 539.9 L691.2 535.4 L694.3 531.1 L697.7 527.0 L701.2 523.1 L705.0 519.4 L708.9 516.1 L712.9 513.0 L717.1 510.3 L721.3 508.0 L725.5 506.0 L729.7 504.4 L733.9 503.2 L738.1 502.4 L742.1 502.1 L746.0 502.1 L749.8 502.6 L753.3 503.5 L756.7 504.8 L759.8 506.4 L762.7 508.5 L765.2 511.0 L767.5 513.7 L769.5 516.9 L771.1 520.3 L772.3 524.0 L773.3 528.0 L773.8 532.1 Z" fill="url(#gHoleR)" stroke="#00105a" stroke-width=".8"/>
<clipPath id="cHR"><path d="M774.0 536.5 L773.8 541.0 L773.3 545.7 L772.3 550.4 L771.1 555.2 L769.5 560.0 L767.5 564.7 L765.2 569.5 L762.7 574.1 L759.8 578.6 L756.7 582.9 L753.3 587.0 L749.8 590.9 L746.0 594.6 L742.1 597.9 L738.1 601.0 L733.9 603.7 L729.7 606.0 L725.5 608.0 L721.3 609.6 L717.1 610.8 L712.9 611.6 L708.9 611.9 L705.0 611.9 L701.2 611.4 L697.7 610.5 L694.3 609.2 L691.2 607.6 L688.3 605.5 L685.8 603.0 L683.5 600.3 L681.5 597.1 L679.9 593.7 L678.7 590.0 L677.7 586.0 L677.2 581.9 L677.0 577.5 L677.2 573.0 L677.7 568.3 L678.7 563.6 L679.9 558.8 L681.5 554.0 L683.5 549.3 L685.8 544.5 L688.3 539.9 L691.2 535.4 L694.3 531.1 L697.7 527.0 L701.2 523.1 L705.0 519.4 L708.9 516.1 L712.9 513.0 L717.1 510.3 L721.3 508.0 L725.5 506.0 L729.7 504.4 L733.9 503.2 L738.1 502.4 L742.1 502.1 L746.0 502.1 L749.8 502.6 L753.3 503.5 L756.7 504.8 L759.8 506.4 L762.7 508.5 L765.2 511.0 L767.5 513.7 L769.5 516.9 L771.1 520.3 L772.3 524.0 L773.3 528.0 L773.8 532.1 Z"/></clipPath>
<g clip-path="url(#cHR)"><path d="M719.1 501.9 L718.9 506.4 L718.4 510.9 L717.5 515.6 L716.3 520.2 L714.7 524.9 L712.8 529.6 L710.5 534.2 L708.0 538.8 L705.2 543.2 L702.2 547.4 L698.9 551.4 L695.4 555.3 L691.7 558.8 L687.9 562.1 L683.9 565.1 L679.9 567.8 L675.7 570.1 L671.6 572.0 L667.5 573.6 L663.3 574.7 L659.3 575.5 L655.3 575.9 L651.5 575.8 L647.8 575.3 L644.3 574.5 L641.0 573.2 L638.0 571.6 L635.2 569.5 L632.7 567.1 L630.4 564.4 L628.5 561.4 L626.9 558.0 L625.7 554.4 L624.8 550.5 L624.3 546.4 L624.1 542.1 L624.3 537.7 L624.8 533.1 L625.7 528.5 L626.9 523.8 L628.5 519.1 L630.4 514.4 L632.7 509.8 L635.2 505.3 L638.0 500.9 L641.0 496.6 L644.3 492.6 L647.8 488.8 L651.5 485.2 L655.3 481.9 L659.3 478.9 L663.3 476.3 L667.5 474.0 L671.6 472.0 L675.7 470.5 L679.9 469.3 L683.9 468.5 L687.9 468.2 L691.7 468.2 L695.4 468.7 L698.9 469.6 L702.2 470.8 L705.2 472.5 L708.0 474.5 L710.5 476.9 L712.8 479.6 L714.7 482.7 L716.3 486.0 L717.5 489.7 L718.4 493.6 L718.9 497.7 Z" fill="#fff" stroke="#00105a" stroke-width=".8"/>
</g>
<clipPath id="cPk"><path d="M725 437 L818 392 Q835 384 852 392.500 L950 462.500 Q962 472 951 484 L855 534 L815 524 Q812 480 790 462 Q770 450 740 456 Z"/></clipPath>
<path d="M725 437 L818 392 Q835 384 852 392.500 L950 462.500 Q962 472 951 484 L855 534 L815 524 Q812 480 790 462 Q770 450 740 456 Z" fill="url(#gPocket)"/>
<g clip-path="url(#cPk)">
<ellipse cx="818" cy="514" rx="6" ry="15" fill="#a8b800" filter="url(#b3)"/>
<ellipse cx="838" cy="405" rx="34" ry="13" transform="rotate(10 838 405)" fill="#0c9c88" opacity=".85" filter="url(#b5)"/>
<ellipse cx="905" cy="500" rx="32" ry="20" transform="rotate(-30 905 500)" fill="#002088" filter="url(#b8)"/>
<path d="M784.1 453.3 L789.0 455.5 L793.5 458.2 L797.8 461.3 L801.8 464.8 L805.4 468.7 L808.6 473.0 L811.5 477.7 L814.0 482.7 L816.2 488.1 L817.9 493.7" fill="none" stroke="#70f0ff" stroke-width="3.500" filter="url(#b3)" opacity=".75"/>
</g>
<path d="M725 437 L818 392 Q835 384 852 392.500 L950 462.500 Q962 472 951 484 L855 534" stroke="#00105a" stroke-width=".8" fill="none"/>
<ellipse cx="1025" cy="647.500" rx="21" ry="9" transform="rotate(-27 1025 647.500)" fill="#000ca8"/>
<path d="M1125.4 571.6 L1125.4 577.4 L1124.5 583.1 L1122.8 588.9 L1120.4 594.5 L1117.2 599.9 L1113.3 605.2 L1108.6 610.3 L1103.3 615.1 L1097.3 619.7 L1090.7 623.9 L1083.5 627.8 L1075.8 631.3 L1067.7 634.5 L1059.2 637.2 L1050.3 639.5 L1041.1 641.3 L1041.0 633.3 L1050.1 631.5 L1058.9 629.2 L1067.4 626.5 L1075.5 623.3 L1083.2 619.8 L1090.3 615.9 L1096.9 611.7 L1102.8 607.1 L1108.2 602.3 L1112.8 597.2 L1116.7 591.9 L1119.9 586.5 L1122.4 580.9 L1124.0 575.1 L1124.9 569.4 L1124.9 563.6 Z" fill="#0018a4"/>
<clipPath id="cSide"><path d="M872.0 556.0 L1075.0 431.0 L1073.9 428.6 L1081.5 425.3 L1088.6 421.6 L1095.2 417.5 L1101.2 413.1 L1106.7 408.5 L1111.4 403.6 L1115.5 398.5 L1118.9 393.2 L1121.6 387.8 L1123.5 382.3 L1124.6 376.7 L1125.0 371.0 L1125.4 563.0 L1125.0 570.0 L1124.5 576.3 L1123.1 582.5 L1120.8 588.6 L1117.6 594.6 L1113.5 600.4 L1108.6 605.9 L1102.8 611.1 L1096.4 616.1 L1089.2 620.6 L1081.3 624.7 L1072.9 628.4 L1064.0 631.6 L1054.6 634.4 L1044.8 636.6 L903.7 720.4 L860.0 720.0 L850.0 600.0 Z"/></clipPath>
<path d="M872.0 556.0 L1075.0 431.0 L1073.9 428.6 L1081.5 425.3 L1088.6 421.6 L1095.2 417.5 L1101.2 413.1 L1106.7 408.5 L1111.4 403.6 L1115.5 398.5 L1118.9 393.2 L1121.6 387.8 L1123.5 382.3 L1124.6 376.7 L1125.0 371.0 L1125.4 563.0 L1125.0 570.0 L1124.5 576.3 L1123.1 582.5 L1120.8 588.6 L1117.6 594.6 L1113.5 600.4 L1108.6 605.9 L1102.8 611.1 L1096.4 616.1 L1089.2 620.6 L1081.3 624.7 L1072.9 628.4 L1064.0 631.6 L1054.6 634.4 L1044.8 636.6 L903.7 720.4 L860.0 720.0 L850.0 600.0 Z" fill="url(#gSide)"/>
<g clip-path="url(#cSide)">
<path d="M880 560 L1050 450 L1075 610 L930 700 Z" fill="#0858b8" opacity=".55" filter="url(#b12)"/>
<path d="M935 515 L1035 455 L1004 565 L962 606 Z" fill="#0a90b0" filter="url(#b8)"/>
<path d="M940 700 L1075 622 L1000 580 Z" fill="#0a90b0" filter="url(#b8)"/>
<path d="M1023 470 L980 580" stroke="#0c84c8" stroke-width="9" opacity=".85" filter="url(#b5)" fill="none"/>
<path d="M1045 640 L1105 598" stroke="#0868c0" stroke-width="12" opacity=".55" filter="url(#b8)" fill="none"/>
<path d="M905 610 L950 560" stroke="#0870c8" stroke-width="14" opacity=".6" filter="url(#b8)" fill="none"/>
<path d="M953 505 L1016 466 L1000 522 L974 566 Z" fill="#22a814" filter="url(#b8)"/>
<path d="M964 498 L1006 472 L986 528 Z" fill="#2cac10" filter="url(#b5)"/>
<ellipse cx="981" cy="489" rx="13" ry="5.500" transform="rotate(-31 981 489)" fill="#d8e000" filter="url(#b5)"/>
<path d="M960 690 L1045 642 L1000 604 Z" fill="#20a818" filter="url(#b8)"/>
<path d="M972 682 L1028 650 L998 622 Z" fill="#2cac10" filter="url(#b5)"/>
<ellipse cx="988" cy="668" rx="8" ry="13" transform="rotate(18 988 668)" fill="#e0c400" filter="url(#b5)"/>
<ellipse cx="980" cy="580" rx="10" ry="16" transform="rotate(35 980 580)" fill="#0024b0" opacity=".55" filter="url(#b5)"/>
<ellipse cx="1110" cy="520" rx="18" ry="70" fill="#0020b0" opacity=".5" filter="url(#b8)"/>
</g>
<path d="M872 556 L1075 431" stroke="#00105a" stroke-width=".8" fill="none"/>
<ellipse cx="1116" cy="494" rx="6.500" ry="20" transform="rotate(8 1116 494)" fill="#0048ff" stroke="#00105a" stroke-width=".7"/>
<ellipse cx="1118" cy="492" rx="3.500" ry="17" transform="rotate(8 1118 492)" fill="#0028c8"/>
<ellipse cx="1009" cy="374.500" rx="116" ry="69.500" fill="#0a7898" stroke="#00105a" stroke-width=".8"/>
<ellipse cx="1009" cy="369" rx="116" ry="69.500" fill="url(#gDisc)" stroke="#00105a" stroke-width=".7"/>
<clipPath id="cDisc"><ellipse cx="1009" cy="369" rx="116" ry="69.500"/></clipPath>
<g clip-path="url(#cDisc)">
<path d="M1063.0 423.6 L1054.4 426.2 L1045.3 428.3 L1036.0 430.0 L1026.5 431.2 L1016.8 431.8 L1007.1 432.0 L997.4 431.6 L987.8 430.8 L978.3 429.4 L969.1 427.5 L960.2 425.2 L951.8 422.4 L943.8 419.2 L936.3 415.6 L929.4 411.6 L923.1 407.2 L917.6 402.5 L912.8 397.6 L908.7 392.4 L905.5 387.1 L903.2 381.6 L901.7 375.9 L901.0 370.3 L901.3 364.6 L902.4 359.0 L904.4 353.4 L907.2 348.0 L910.9 342.7 L915.3 337.7 L920.5 332.9" fill="none" stroke="#38b8ff" stroke-width="9" filter="url(#b5)"/>
<ellipse cx="915" cy="395" rx="14" ry="26" transform="rotate(-25 915 395)" fill="#58d0ff" filter="url(#b5)"/>
<ellipse cx="985" cy="430" rx="45" ry="6" transform="rotate(8 985 430)" fill="#40c0ff" filter="url(#b5)"/>
<ellipse cx="1085" cy="335" rx="40" ry="22" transform="rotate(30 1085 335)" fill="#0030e4" filter="url(#b8)"/>
</g>
<ellipse cx="1009" cy="372" rx="74" ry="44" fill="#0a58e8" stroke="#00105a" stroke-width=".8"/>
<ellipse cx="1009" cy="373" rx="69" ry="41" fill="#0030c0" stroke="#1890ff" stroke-width="1.200"/>
<ellipse cx="1009" cy="374" rx="64" ry="38" fill="#0020b0" stroke="#0a68f0" stroke-width="1.500"/>
<ellipse cx="1009" cy="376" rx="60" ry="35" fill="#0838d8" stroke="#00105a" stroke-width=".6"/>
<path d="M1042.0 340.2 L1047.8 342.4 L1053.2 345.0 L1058.0 347.9 L1062.4 351.1 L1066.2 354.5 L1069.3 358.1 L1071.8 361.9 L1073.6 365.9 L1074.6 369.9 L1075.0 374.0 L1074.6 378.1 L1073.6 382.1 L1071.8 386.1 L1069.3 389.9 L1066.2 393.5 L1062.4 396.9 L1058.0 400.1 L1053.2 403.0 L1047.8 405.6 L1042.0 407.8" fill="none" stroke="#001078" stroke-width="5" opacity=".8"/>
<path d="M1066.5 380.0 L1066.0 384.2 L1064.5 388.3 L1062.1 392.2 L1058.7 396.0 L1054.5 399.5 L1049.5 402.6 L1043.8 405.4 L1037.5 407.7 L1030.7 409.6 L1023.5 410.9 L1016.1 411.7 L1008.5 412.0 L1000.9 411.7 L993.5 410.9 L986.3 409.6 L979.5 407.7 L973.2 405.4 L967.5 402.6 L962.5 399.5 L958.3 396.0 L954.9 392.2 L952.5 388.3 L951.0 384.2 L950.5 380.0 L971.0 305.0 L1009.0 281.0 L1047.0 304.0 Z" fill="url(#gCone)"/>
<path d="M1065.9 384.5 L1064.6 388.2 L1062.4 391.8 L1059.5 395.3 L1055.8 398.5 L1051.5 401.5 L1046.6 404.2 L1041.1 406.5 L1035.1 408.4 L1028.8 410.0 L1022.2 411.1 L1015.4 411.8 L1008.5 412.0 L1001.6 411.8 L994.8 411.1 L988.2 410.0 L981.9 408.4 L975.9 406.5 L970.4 404.2 L965.5 401.5 L961.2 398.5 L957.5 395.3 L954.6 391.8 L952.4 388.2 L951.1 384.5 L952.1 379.3 L953.4 382.9 L955.5 386.4 L958.4 389.8 L962.0 392.9 L966.3 395.8 L971.1 398.4 L976.5 400.6 L982.3 402.5 L988.5 404.0 L995.0 405.1 L1001.7 405.8 L1008.5 406.0 L1015.3 405.8 L1022.0 405.1 L1028.5 404.0 L1034.7 402.5 L1040.5 400.6 L1045.9 398.4 L1050.7 395.8 L1055.0 392.9 L1058.6 389.8 L1061.5 386.4 L1063.6 382.9 L1064.9 379.3 Z" fill="#000890" opacity=".7"/>
<ellipse cx="1009" cy="304" rx="38" ry="23" fill="#0404f4"/>
<ellipse cx="1009" cy="305" rx="21.500" ry="13.500" fill="#0000a8"/>
<clipPath id="cHullF"><path d="M700 480 L846 480 L849 523 L873 557 L900 560 L980 600 L980 790 L700 790 Z"/></clipPath>
<path d="M719.4 659.4 L719.7 651.1 L720.8 642.5 L722.5 633.8 L724.8 625.0 L727.8 616.1 L731.5 607.3 L735.7 598.6 L740.5 590.1 L745.8 581.8 L751.5 573.8 L757.8 566.2 L764.4 559.0 L771.4 552.3 L778.6 546.1 L786.1 540.4 L793.8 535.4 L801.6 531.1 L809.4 527.4 L817.2 524.5 L825.0 522.2 L832.7 520.8 L840.2 520.1 L847.4 520.1 L854.4 521.0 L861.0 522.6 L867.2 525.0 L873.0 528.1 L924.0 564.1 L929.3 567.9 L934.1 572.4 L938.3 577.5 L942.0 583.2 L945.0 589.5 L947.3 596.4 L949.0 603.6 L950.1 611.4 L950.4 619.4 L950.1 627.7 L949.0 636.3 L947.3 645.0 L945.0 653.8 L942.0 662.7 L938.3 671.5 L934.1 680.2 L929.3 688.7 L924.0 697.0 L918.2 705.0 L912.0 712.6 L905.4 719.8 L898.4 726.5 L891.2 732.7 L883.7 738.4 L876.0 743.4 L868.2 747.7 L860.4 751.4 L852.6 754.4 L844.8 756.6 L837.1 758.0 L829.6 758.7 L822.4 758.6 L815.4 757.8 L808.8 756.2 L802.5 753.8 L796.8 750.7 L745.8 714.7 L740.5 710.9 L735.7 706.4 L731.5 701.3 L727.8 695.6 L724.8 689.3 L722.5 682.4 L720.8 675.1 L719.7 667.5 Z" fill="url(#gLugF)"/>
<linearGradient id="gStrip" gradientUnits="userSpaceOnUse" x1="858" y1="548" x2="932" y2="506"><stop offset="0" stop-color="#0626f6"/><stop offset=".35" stop-color="#0a48fa"/><stop offset=".7" stop-color="#1080ff" stop-opacity=".8"/><stop offset="1" stop-color="#18b0ff" stop-opacity="0"/></linearGradient>
<path d="M838 521 L850 518 L864 518.500 L880 526 L916 506 L940 516 L874 558 Z" fill="url(#gStrip)"/>
<path d="M856 533.500 L880 521" stroke="#00105a" stroke-width=".8" fill="none"/>
<path d="M873 557.500 L900 540.500" stroke="#00105a" stroke-width=".8" fill="none"/>
<path d="M950.4 619.4 L950.1 627.7 L949.0 636.3 L947.3 645.0 L945.0 653.8 L942.0 662.7 L938.3 671.5 L934.1 680.2 L929.3 688.7 L924.0 697.0 L918.3 705.0 L912.0 712.6 L905.4 719.8 L898.4 726.5 L891.2 732.7 L883.7 738.4 L876.0 743.4 L868.2 747.7 L860.4 751.4 L852.6 754.4 L844.8 756.6 L837.1 758.0 L829.6 758.7 L822.4 758.7 L815.4 757.8 L808.8 756.2 L802.5 753.8 L796.8 750.7 L791.5 746.9 L786.7 742.4 L782.5 737.3 L778.8 731.6 L775.8 725.3 L773.5 718.4 L771.8 711.1 L770.7 703.4 L770.4 695.4 L770.7 687.1 L771.8 678.5 L773.5 669.8 L775.8 661.0 L778.8 652.1 L782.5 643.3 L786.7 634.6 L791.5 626.1 L796.8 617.8 L802.5 609.8 L808.8 602.2 L815.4 595.0 L822.4 588.3 L829.6 582.1 L837.1 576.4 L844.8 571.4 L852.6 567.1 L860.4 563.4 L868.2 560.4 L876.0 558.2 L883.7 556.8 L891.2 556.1 L898.4 556.1 L905.4 557.0 L912.0 558.6 L918.3 561.0 L924.0 564.1 L929.3 567.9 L934.1 572.4 L938.3 577.5 L942.0 583.2 L945.0 589.5 L947.3 596.4 L949.0 603.7 L950.1 611.4 Z" fill="url(#gFaceF)" stroke="#00105a" stroke-width=".8"/>
<clipPath id="cFF"><path d="M950.4 619.4 L950.1 627.7 L949.0 636.3 L947.3 645.0 L945.0 653.8 L942.0 662.7 L938.3 671.5 L934.1 680.2 L929.3 688.7 L924.0 697.0 L918.3 705.0 L912.0 712.6 L905.4 719.8 L898.4 726.5 L891.2 732.7 L883.7 738.4 L876.0 743.4 L868.2 747.7 L860.4 751.4 L852.6 754.4 L844.8 756.6 L837.1 758.0 L829.6 758.7 L822.4 758.7 L815.4 757.8 L808.8 756.2 L802.5 753.8 L796.8 750.7 L791.5 746.9 L786.7 742.4 L782.5 737.3 L778.8 731.6 L775.8 725.3 L773.5 718.4 L771.8 711.1 L770.7 703.4 L770.4 695.4 L770.7 687.1 L771.8 678.5 L773.5 669.8 L775.8 661.0 L778.8 652.1 L782.5 643.3 L786.7 634.6 L791.5 626.1 L796.8 617.8 L802.5 609.8 L808.8 602.2 L815.4 595.0 L822.4 588.3 L829.6 582.1 L837.1 576.4 L844.8 571.4 L852.6 567.1 L860.4 563.4 L868.2 560.4 L876.0 558.2 L883.7 556.8 L891.2 556.1 L898.4 556.1 L905.4 557.0 L912.0 558.6 L918.3 561.0 L924.0 564.1 L929.3 567.9 L934.1 572.4 L938.3 577.5 L942.0 583.2 L945.0 589.5 L947.3 596.4 L949.0 603.7 L950.1 611.4 Z"/></clipPath>
<g clip-path="url(#cFF)"><ellipse cx="935" cy="625" rx="14" ry="50" transform="rotate(8 935 625)" fill="#0048b0" opacity=".8" filter="url(#b8)"/><ellipse cx="880" cy="735" rx="45" ry="14" transform="rotate(-20 880 735)" fill="#0030c8" opacity=".7" filter="url(#b8)"/></g>
<path d="M908.8 634.4 L908.6 638.9 L908.1 643.5 L907.2 648.2 L905.9 653.0 L904.3 657.9 L902.3 662.7 L900.0 667.5 L897.5 672.2 L894.6 676.8 L891.5 681.2 L888.2 685.5 L884.6 689.5 L880.9 693.4 L877.0 696.9 L872.9 700.1 L868.8 703.0 L864.6 705.6 L860.4 707.8 L856.2 709.6 L852.0 711.0 L847.9 712.0 L843.8 712.6 L839.9 712.8 L836.2 712.5 L832.6 711.9 L829.3 710.8 L826.2 709.3 L823.3 707.4 L820.8 705.1 L818.5 702.5 L816.5 699.5 L814.9 696.3 L813.6 692.7 L812.7 688.8 L812.2 684.7 L812.0 680.4 L812.2 675.9 L812.7 671.3 L813.6 666.6 L814.9 661.8 L816.5 656.9 L818.5 652.1 L820.8 647.3 L823.3 642.6 L826.2 638.0 L829.3 633.6 L832.6 629.3 L836.2 625.3 L839.9 621.4 L843.8 617.9 L847.9 614.7 L852.0 611.8 L856.2 609.2 L860.4 607.0 L864.6 605.2 L868.8 603.8 L872.9 602.8 L877.0 602.2 L880.9 602.0 L884.6 602.3 L888.2 602.9 L891.5 604.0 L894.6 605.5 L897.5 607.4 L900.0 609.7 L902.3 612.3 L904.3 615.3 L905.9 618.5 L907.2 622.1 L908.1 626.0 L908.6 630.1 Z" fill="url(#gHoleF)" stroke="#00105a" stroke-width=".8"/>
<clipPath id="cHF"><path d="M908.8 634.4 L908.6 638.9 L908.1 643.5 L907.2 648.2 L905.9 653.0 L904.3 657.9 L902.3 662.7 L900.0 667.5 L897.5 672.2 L894.6 676.8 L891.5 681.2 L888.2 685.5 L884.6 689.5 L880.9 693.4 L877.0 696.9 L872.9 700.1 L868.8 703.0 L864.6 705.6 L860.4 707.8 L856.2 709.6 L852.0 711.0 L847.9 712.0 L843.8 712.6 L839.9 712.8 L836.2 712.5 L832.6 711.9 L829.3 710.8 L826.2 709.3 L823.3 707.4 L820.8 705.1 L818.5 702.5 L816.5 699.5 L814.9 696.3 L813.6 692.7 L812.7 688.8 L812.2 684.7 L812.0 680.4 L812.2 675.9 L812.7 671.3 L813.6 666.6 L814.9 661.8 L816.5 656.9 L818.5 652.1 L820.8 647.3 L823.3 642.6 L826.2 638.0 L829.3 633.6 L832.6 629.3 L836.2 625.3 L839.9 621.4 L843.8 617.9 L847.9 614.7 L852.0 611.8 L856.2 609.2 L860.4 607.0 L864.6 605.2 L868.8 603.8 L872.9 602.8 L877.0 602.2 L880.9 602.0 L884.6 602.3 L888.2 602.9 L891.5 604.0 L894.6 605.5 L897.5 607.4 L900.0 609.7 L902.3 612.3 L904.3 615.3 L905.9 618.5 L907.2 622.1 L908.1 626.0 L908.6 630.1 Z"/></clipPath>
<g clip-path="url(#cHF)"><path d="M853.8 597.8 L853.6 602.2 L853.1 606.7 L852.2 611.3 L850.9 616.0 L849.3 620.8 L847.4 625.5 L845.2 630.2 L842.7 634.8 L839.9 639.3 L836.8 643.7 L833.5 647.9 L830.1 651.8 L826.4 655.6 L822.6 659.0 L818.6 662.2 L814.6 665.0 L810.5 667.6 L806.3 669.7 L802.2 671.5 L798.1 672.9 L794.1 673.9 L790.1 674.4 L786.3 674.6 L782.6 674.4 L779.1 673.7 L775.9 672.6 L772.8 671.2 L770.0 669.3 L767.5 667.1 L765.3 664.5 L763.4 661.6 L761.8 658.4 L760.5 654.9 L759.6 651.1 L759.1 647.1 L758.9 642.9 L759.1 638.5 L759.6 633.9 L760.5 629.3 L761.8 624.6 L763.4 619.9 L765.3 615.1 L767.5 610.5 L770.0 605.8 L772.8 601.3 L775.9 597.0 L779.1 592.8 L782.6 588.8 L786.3 585.1 L790.1 581.6 L794.1 578.4 L798.1 575.6 L802.2 573.1 L806.3 570.9 L810.5 569.2 L814.6 567.8 L818.6 566.8 L822.6 566.2 L826.4 566.0 L830.1 566.3 L833.5 566.9 L836.8 568.0 L839.9 569.5 L842.7 571.3 L845.2 573.5 L847.4 576.1 L849.3 579.0 L850.9 582.2 L852.2 585.8 L853.1 589.5 L853.6 593.6 Z" fill="#fff" stroke="#00105a" stroke-width=".8"/>
</g>
</svg>
<div class="t" style="left:934.6px;top:130.14px;font-size:12px;line-height:14px;letter-spacing:-0.169px;color:#111;">Model name: ASM BOOM 14</div>
<div class="t" style="left:934.6px;top:146.34px;font-size:12px;line-height:14px;letter-spacing:-0.035px;color:#111;">Study name: KnuckleJoint(-Vertical Motion Only-)</div>
<div class="t" style="left:934.6px;top:162.44px;font-size:12px;line-height:14px;transform:scaleX(0.9529);transform-origin:0 50%;color:#111;">Plot type: Static nodal stress Stress1</div>
<div class="t" style="left:934.6px;top:178.54px;font-size:12px;line-height:14px;letter-spacing:-0.068px;color:#111;">Global value: 0.2005 to 199.78 N/mm^2 (MPa)</div>
<div class="t" style="left:349.4px;top:116.86px;font-size:10.5px;line-height:14px;transform:scaleX(0.8810);transform-origin:0 50%;color:#222;">ASM BOOM 14 (Vertical ...</div>
<div class="t" style="left:1292.9px;top:246.44px;font-size:12px;line-height:14px;letter-spacing:0.029px;color:#111;">von Mises (N/mm^2 (MPa))</div>
<div class="abs" style="left:1293px;top:289px;width:25.400px;height:320.700px;background:linear-gradient(to bottom,#ff0000 0%,#ffff00 20%,#00ff00 50%,#00ffff 70%,#0000ff 100%)"></div>
<div class="abs" style="left:1293px;top:288.500px;width:29px;height:1px;background:#222"></div>
<div class="t" style="left:1331.5px;top:278.44px;font-size:12px;line-height:14px;transform:scaleX(0.9061);transform-origin:0 50%;color:#111;">199.780</div>
<div class="t" style="left:1331.5px;top:310.51px;font-size:12px;line-height:14px;transform:scaleX(0.9061);transform-origin:0 50%;color:#111;">179.822</div>
<div class="abs" style="left:1318.400px;top:321.1px;width:3.500px;height:1px;background:#333"></div>
<div class="t" style="left:1331.5px;top:342.58px;font-size:12px;line-height:14px;transform:scaleX(0.9061);transform-origin:0 50%;color:#111;">159.864</div>
<div class="abs" style="left:1318.400px;top:353.1px;width:3.500px;height:1px;background:#333"></div>
<div class="t" style="left:1331.5px;top:374.65px;font-size:12px;line-height:14px;transform:scaleX(0.9061);transform-origin:0 50%;color:#111;">139.906</div>
<div class="abs" style="left:1318.400px;top:385.2px;width:3.500px;height:1px;background:#333"></div>
<div class="t" style="left:1331.5px;top:406.72px;font-size:12px;line-height:14px;transform:scaleX(0.9251);transform-origin:0 50%;color:#111;">119.948</div>
<div class="abs" style="left:1318.400px;top:417.3px;width:3.500px;height:1px;background:#333"></div>
<div class="t" style="left:1331.5px;top:438.79px;font-size:12px;line-height:14px;transform:scaleX(0.9101);transform-origin:0 50%;color:#111;">99.990</div>
<div class="abs" style="left:1318.400px;top:449.4px;width:3.500px;height:1px;background:#333"></div>
<div class="t" style="left:1331.5px;top:470.86px;font-size:12px;line-height:14px;transform:scaleX(0.9101);transform-origin:0 50%;color:#111;">80.032</div>
<div class="abs" style="left:1318.400px;top:481.4px;width:3.500px;height:1px;background:#333"></div>
<div class="t" style="left:1331.5px;top:502.93px;font-size:12px;line-height:14px;transform:scaleX(0.9101);transform-origin:0 50%;color:#111;">60.074</div>
<div class="abs" style="left:1318.400px;top:513.5px;width:3.500px;height:1px;background:#333"></div>
<div class="t" style="left:1331.5px;top:535.00px;font-size:12px;line-height:14px;transform:scaleX(0.9327);transform-origin:0 50%;color:#111;">40.116</div>
<div class="abs" style="left:1318.400px;top:545.6px;width:3.500px;height:1px;background:#333"></div>
<div class="t" style="left:1331.5px;top:567.07px;font-size:12px;line-height:14px;transform:scaleX(0.9101);transform-origin:0 50%;color:#111;">20.158</div>
<div class="abs" style="left:1318.400px;top:577.6px;width:3.500px;height:1px;background:#333"></div>
<div class="t" style="left:1331.5px;top:599.14px;font-size:12px;line-height:14px;transform:scaleX(0.9092);transform-origin:0 50%;color:#111;">0.200</div>
<div class="abs" style="left:1318.400px;top:609.7px;width:3.500px;height:1px;background:#333"></div>
<div class="abs" style="left:1293px;top:609.200px;width:29px;height:1px;background:#222"></div>
<div class="t" style="left:1296.2px;top:630.54px;font-size:12px;line-height:14px;letter-spacing:-0.180px;color:#111;">Yield strength: 250.000</div>
<svg class="abs" style="left:1260px;top:628px" width="40" height="18" viewBox="1260 628 40 18"><path d="M1267.500 636.800 H1283" stroke="#f00" stroke-width="1.200"/><path d="M1282.500 631.300 L1292.500 636.800 L1282.500 642.300 Z" fill="#f00"/></svg>
<div class="t" style="left:322.9px;top:819.74px;font-size:10px;line-height:14px;letter-spacing:0.190px;font-weight:bold;color:#111;">Knuckle ISO</div>
<svg class="abs" style="left:313px;top:94px" width="1223" height="742" viewBox="313 94 1223 742">
<!-- tree item -->
<path d="M318 120.300 L321.200 122.900 L318 125.500 Z" fill="#333"/>
<path d="M332.500 122.500 L336.500 118 L339 118.800 V117 L342.500 116.200 L345.500 118 V125 L339 130 L332.500 125.800 Z" fill="#f3c81d" stroke="#b8860b" stroke-width=".8" stroke-linejoin="round"/>
<path d="M338.300 119.300 L341.800 117.600 L345 119.300 V123.400 L341.800 125.300 L338.300 123.400 Z" fill="#5db9e6" stroke="#1f6e9c" stroke-width=".8" stroke-linejoin="round"/>
<path d="M338.300 119.300 L341.800 121 L345 119.300 M341.800 121 V125.300" fill="none" stroke="#1f6e9c" stroke-width=".7"/>
<!-- heads-up toolbar -->
<g fill="none" stroke-linecap="round" stroke-linejoin="round">
 <circle cx="803.500" cy="102.800" r="4.800" stroke="#6b7a8a" stroke-width="1.200" fill="#f4f7fa"/>
 <path d="M800 106.500 L795.800 111.300" stroke="#4a9ad4" stroke-width="2.200"/>
 <path d="M801.500 102.800 h4 M803.500 100.800 v4" stroke="#8a97a5" stroke-width=".8"/>
 <circle cx="823.500" cy="102.800" r="4.800" stroke="#6b7a8a" stroke-width="1.200" fill="#f4f7fa"/>
 <path d="M820 106.500 L815.800 111.300" stroke="#4a9ad4" stroke-width="2.200"/>
 <rect x="820" y="98" width="9.500" height="9.500" stroke="#777" stroke-width=".8" stroke-dasharray="1.800 1.400"/>
 <path d="M837.500 107.500 L846 99.500 L849.500 101.500 L841.500 110.500 Z" fill="#c9ced4" stroke="#7d8792" stroke-width=".9"/>
 <path d="M850 109 H844.500 M846.500 106.800 L844.300 109 L846.500 111.200" stroke="#2f86c8" stroke-width="1.500"/>
 <path d="M857.500 102 Q864 98 870.500 102 V109.500 Q864 113.500 857.500 109.500 Z" fill="#ececec" stroke="#d6d6d6" stroke-width="1"/>
 <path d="M878 102 L882.500 98.500 H892 V107.500 L887.500 111.500 H878 Z" fill="#fff" stroke="#555" stroke-width=".9"/>
 <path d="M878 102 H887.500 V111.500 H878 Z" fill="#7fb9e0" stroke="#2a6a9a" stroke-width=".9"/>
 <path d="M887.500 102 L892 98.500" stroke="#555" stroke-width=".9"/>
 <path d="M911 101 L916 98.500 L924 100.500 V109.500 L918.500 112.500 L911 110 Z" fill="#f5f5f5" stroke="#555" stroke-width=".9"/>
 <path d="M911 101 L918.500 103 V112.500 L911 110 Z" fill="#5aa5d6" stroke="#2a6a9a" stroke-width=".9"/>
 <path d="M918.500 103 L924 100.500" stroke="#555" stroke-width=".9"/>
 <path d="M942.500 105 Q949 98.500 955.500 105 Q949 111.500 942.500 105 Z" fill="#e9e9e9" stroke="#777" stroke-width="1"/>
 <circle cx="949" cy="105" r="2.800" fill="#444" stroke="none"/>
 <path d="M949 99 V112" stroke="#555" stroke-width=".8"/>
 <circle cx="980" cy="103.500" r="6" fill="#e9e9e9" stroke="#dcdcdc"/>
 <path d="M976 112 L984 106 L987 108.500 L979 113.500 Z" fill="#e2e2e2" stroke="#d5d5d5" stroke-width=".8"/>
 <circle cx="1002" cy="103" r="5.500" fill="#e9e9e9" stroke="#dcdcdc"/>
 <path d="M994.500 112.500 L998 106.500 H1006 L1009.500 112.500 Z" fill="#ececec" stroke="#d8d8d8" stroke-width=".8"/>
 <rect x="1027" y="99.500" width="13.500" height="9" fill="#d9dde1" stroke="#555" stroke-width="1.100"/>
 <path d="M1033.700 108.500 V111 M1030 111.500 H1037.500" stroke="#555" stroke-width="1.200"/>
</g>
<path d="M898 104 h4.500 l-2.250 2.700 z M930 104 h4.500 l-2.250 2.700 z M962 104 h4.500 l-2.250 2.700 z M1015 104 h4.500 l-2.250 2.700 z M1047 104 h4.500 l-2.250 2.700 z" fill="#777"/>
<!-- window controls -->
<g fill="none" stroke="#8a8a8a" stroke-width="1">
 <rect x="1433.500" y="101.500" width="7.500" height="8.500"/><path d="M1438 104 L1436 105.800 L1438 107.600 Z" fill="#8a8a8a"/>
 <rect x="1454.500" y="101.500" width="7.500" height="8.500"/><path d="M1457.500 104 L1459.500 105.800 L1457.500 107.600 Z" fill="#8a8a8a"/>
 <path d="M1478 110 H1485" stroke-width="1.300"/>
 <path d="M1497.500 104 V101.500 H1505.500 V107.500 H1503"/><rect x="1494.500" y="104.500" width="8" height="5.500"/>
 <path d="M1517 101.500 L1525.500 110 M1525.500 101.500 L1517 110" stroke-width="1.200"/>
</g>
<!-- faded ok / cancel -->
<path d="M1455.500 131 L1461 136.500 L1475.500 124" fill="none" stroke="#b4e0ae" stroke-width="4.200"/>
<path d="M1492 147.500 L1507 162.500 M1507 147.500 L1492 162.500" stroke="#f2b8b3" stroke-width="4.600"/>
<!-- right task pane tabs -->
<rect x="1514.500" y="133.500" width="22" height="96.500" fill="#e4e4e4" stroke="#9a9a9a" stroke-width="1"/>
<path d="M1517.500 149 V139.500 H1522 L1523.500 141 H1530 V143 M1517.500 149 L1520.500 142.500 H1533.500 L1530.500 149 Z" fill="#f6f6f6" stroke="#222" stroke-width="1.100" stroke-linejoin="round"/>
<rect x="1517.500" y="156.500" width="14.500" height="11.500" fill="#e9b417" stroke="#333" stroke-width="1"/>
<path d="M1520 158.500 h5 l-1.500 2 v3.500 l1.500 2 h-5 l1.500 -2 v-3.500 z" fill="#fff" stroke="#333" stroke-width=".6"/><rect x="1527.500" y="158.500" width="3" height="3" fill="#fff" stroke="#333" stroke-width=".6"/><rect x="1527.500" y="163.500" width="3" height="3" fill="#fff" stroke="#333" stroke-width=".6"/>
<g>
 <circle cx="1524.500" cy="181.500" r="7" fill="#e0281d"/>
 <path d="M1524.500 181.500 V174.500 A7 7 0 0 0 1517.500 181.500 Z" fill="#2d7ee0"/>
 <path d="M1524.500 181.500 H1517.500 A7 7 0 0 0 1524.500 188.500 Z" fill="#35b13a"/>
 <path d="M1524.500 182.500 V188.500 A7 7 0 0 0 1531.500 182.500 Z" fill="#f5c518"/>
 <circle cx="1524.500" cy="181.500" r="7" fill="none" stroke="#666" stroke-width=".6"/>
</g>
<rect x="1517.500" y="195.500" width="14" height="12.500" fill="#f4f7fa" stroke="#2a5d86" stroke-width="1.200"/>
<rect x="1517.500" y="195.500" width="14" height="2.800" fill="#3d7fb3"/>
<path d="M1519.500 200.500 h2.500 M1519.500 203 h2.500 M1519.500 205.500 h2.500" stroke="#1d5f90" stroke-width="1.500"/><path d="M1523.500 200.500 h6.500 M1523.500 203 h6.500 M1523.500 205.500 h6.500" stroke="#555" stroke-width="1"/>
<path d="M1518.500 216 L1521.500 214 L1524.500 215 L1527.500 214 L1530.500 216 V226 L1527.500 227.500 L1524.500 226.500 L1521.500 227.500 L1518.500 226 Z M1521.500 214 V227.500 M1524.500 215 V226.500 M1527.500 214 V227.500" fill="#f3f3f3" stroke="#333" stroke-width=".9" stroke-linejoin="round"/>
<!-- right edge strip -->
<rect x="1535" y="266" width="1" height="150" fill="#e9eef2"/>
<path d="M1535.500 270 v6 M1535.500 330 v8 M1535.500 395 v10" stroke="#555" stroke-width="1"/><path d="M1535.500 352 v8" stroke="#e8b417" stroke-width="1"/><path d="M1535.500 362 v7" stroke="#3a8fd0" stroke-width="1"/><path d="M1535.500 371 v6" stroke="#35b13a" stroke-width="1"/>
<!-- triad -->
<g>
 <path d="M345.500 788 L361.500 779.800" stroke="#b81414" stroke-width="2.600"/><path d="M356 777.500 L364 778 L359.500 784.500 Z" fill="#b81414"/>
 <path d="M345.500 788 L357 795.500" stroke="#1616d8" stroke-width="2.800"/><path d="M357 791 L361.500 798.500 L352.500 798.500 Z" fill="#1616d8"/>
 <path d="M345.500 788 V772" stroke="#146c14" stroke-width="2.600"/><path d="M341.500 775.500 L345.500 767.500 L349.500 775.500 Z" fill="#146c14"/>
 <text x="342.300" y="766.500" font-family="Liberation Sans, sans-serif" font-size="7.500" fill="#3aa04a">Y</text>
 <text x="363.200" y="779.500" font-family="Liberation Sans, sans-serif" font-size="7.500" fill="#ff3a3a">X</text>
 <text x="360" y="804" font-family="Liberation Sans, sans-serif" font-size="7.500" font-style="italic" fill="#2a2aff">Z</text>
</g>
</svg>
</div>
<div id="btabs"></div>
<div id="status"></div>
<div id="botc" style="position:absolute;left:0;top:0;width:1536px;height:864px;pointer-events:none">
<div class="abs" style="left:0;top:837.500px;width:612px;height:11.500px;background:#dadada"></div>
<div class="abs" style="left:612px;top:837.500px;width:88.500px;height:11.500px;background:#f6f6f6;border-left:1px solid #a8a8a8;border-right:1px solid #a8a8a8"></div>
<div class="abs" style="left:3.0px;top:837px;width:12px;height:11.500px;background:#c9c9c9;border:1px solid #bcbcbc"></div>
<div class="abs" style="left:15.6px;top:837px;width:12px;height:11.500px;background:#c9c9c9;border:1px solid #bcbcbc"></div>
<div class="abs" style="left:28.2px;top:837px;width:12px;height:11.500px;background:#c9c9c9;border:1px solid #bcbcbc"></div>
<div class="abs" style="left:40.8px;top:837px;width:12px;height:11.500px;background:#c9c9c9;border:1px solid #bcbcbc"></div>
<svg class="abs" style="left:0;top:836px" width="60" height="13" viewBox="0 0 60 13"><g fill="#b0b0b0"><path d="M6 3.500 h1 v6 h-1z M12 3.500 v6 l-4.500 -3z M24 3.500 v6 l-4.500 -3z M32 3.500 v6 l4.500 -3z M45 3.500 v6 l4.500 -3z M50 3.500 h1 v6 h-1z"/></g></svg>
<div class="abs" style="left:97.0px;top:837px;width:1px;height:11px;background:#a8a8a8"></div>
<div class="abs" style="left:189.5px;top:837px;width:1px;height:11px;background:#a8a8a8"></div>
<div class="abs" style="left:312.0px;top:837px;width:1px;height:11px;background:#a8a8a8"></div>
<div class="abs" style="left:398.5px;top:837px;width:1px;height:11px;background:#a8a8a8"></div>
<div class="abs" style="left:504.5px;top:837px;width:1px;height:11px;background:#a8a8a8"></div>
<div class="abs" style="left:610.5px;top:837px;width:1px;height:11px;background:#a8a8a8"></div>
<div class="t" style="left:65.5px;top:834.83px;font-size:10px;line-height:14px;letter-spacing:-0.184px;">Model</div>
<div class="t" style="left:120.0px;top:834.83px;font-size:10px;line-height:14px;transform:scaleX(0.9216);transform-origin:0 50%;">Design Study 1</div>
<div class="t" style="left:199.0px;top:834.83px;font-size:10px;line-height:14px;letter-spacing:-0.182px;">Estudio de movimiento 1</div>
<div class="t" style="left:334.0px;top:834.83px;font-size:10px;line-height:14px;transform:scaleX(0.9157);transform-origin:0 50%;">FullAssyStatic</div>
<div class="t" style="left:420.0px;top:834.83px;font-size:10px;line-height:14px;transform:scaleX(0.9174);transform-origin:0 50%;">FullAssyFrequency</div>
<div class="t" style="left:528.0px;top:834.83px;font-size:10px;line-height:14px;transform:scaleX(0.9121);transform-origin:0 50%;">BracketAssyStatic</div>
<div class="t" style="left:630.0px;top:834.83px;font-size:10px;line-height:14px;transform:scaleX(0.9079);transform-origin:0 50%;font-weight:bold;color:#111;">KnuckleJoint</div>
<svg class="abs" style="left:95px;top:836px" width="540" height="13" viewBox="95 836 540 13"><path d="M102 838.500 L104.700 842 V846 M104.700 842 L107.500 838.500" stroke="#3a3a3a" stroke-width="1.800" fill="none"/><path d="M107.500 841 L110.200 842.800 L107.500 844.600 Z" fill="#2a84c0"/><path d="M110.500 840 H114.500 M112.500 840 V845" stroke="#3a3a3a" stroke-width="1.700" fill="none"/><path d="M320 838.500 L322.5 841.800 V846 M322.5 841.800 L325 838.500" stroke="#3a3a3a" stroke-width="1.700" fill="none"/><path d="M326.5 839.500 V844.500 M325 842.800 L326.5 845 L328 842.800" stroke="#2478b8" stroke-width="1.100" fill="none"/><path d="M515 838.500 L517.5 841.800 V846 M517.5 841.800 L520 838.500" stroke="#3a3a3a" stroke-width="1.700" fill="none"/><path d="M521.5 839.500 V844.500 M520 842.800 L521.5 845 L523 842.800" stroke="#2478b8" stroke-width="1.100" fill="none"/><path d="M618 838.500 L620.5 841.800 V846 M620.5 841.800 L623 838.500" stroke="#3a3a3a" stroke-width="1.700" fill="none"/><path d="M624.5 839.500 V844.500 M623 842.800 L624.5 845 L626 842.800" stroke="#2478b8" stroke-width="1.100" fill="none"/><path d="M406 838.500 L408.500 841.800 V846.500 M408.500 841.800 L411 838.500" stroke="#3a3a3a" stroke-width="1.700" fill="none"/></svg>
<div class="t" style="left:1.0px;top:850.83px;font-size:10px;line-height:14px;transform:scaleX(0.9121);transform-origin:0 50%;color:#111;">SOLIDWORKS Connected Premium</div>
<div class="t" style="left:1289.5px;top:851.01px;font-size:9.5px;line-height:14px;letter-spacing:-0.021px;color:#111;">Under Defined</div>
<div class="t" style="left:1462.0px;top:851.01px;font-size:9.5px;line-height:14px;letter-spacing:0.054px;color:#b4b4b4;">Custom</div>
<svg class="abs" style="left:1380px;top:850px" width="140" height="14" viewBox="1380 850 140 14"><path d="M1387 858.500 L1392 852.500 L1396 858.500 Z" fill="#e8b400" stroke="#6b5a00" stroke-width=".7"/><path d="M1394 853 l2.500 -1.500 l.5 3z" fill="#333"/><path d="M1387 861.500 h10" stroke="#2a6fb0" stroke-width="1.600" stroke-dasharray="1.500 .8"/><path d="M1508.500 858.500 h4.500 l-2.250 -3z" fill="#666"/></svg>
</div>

</body>
</html>
